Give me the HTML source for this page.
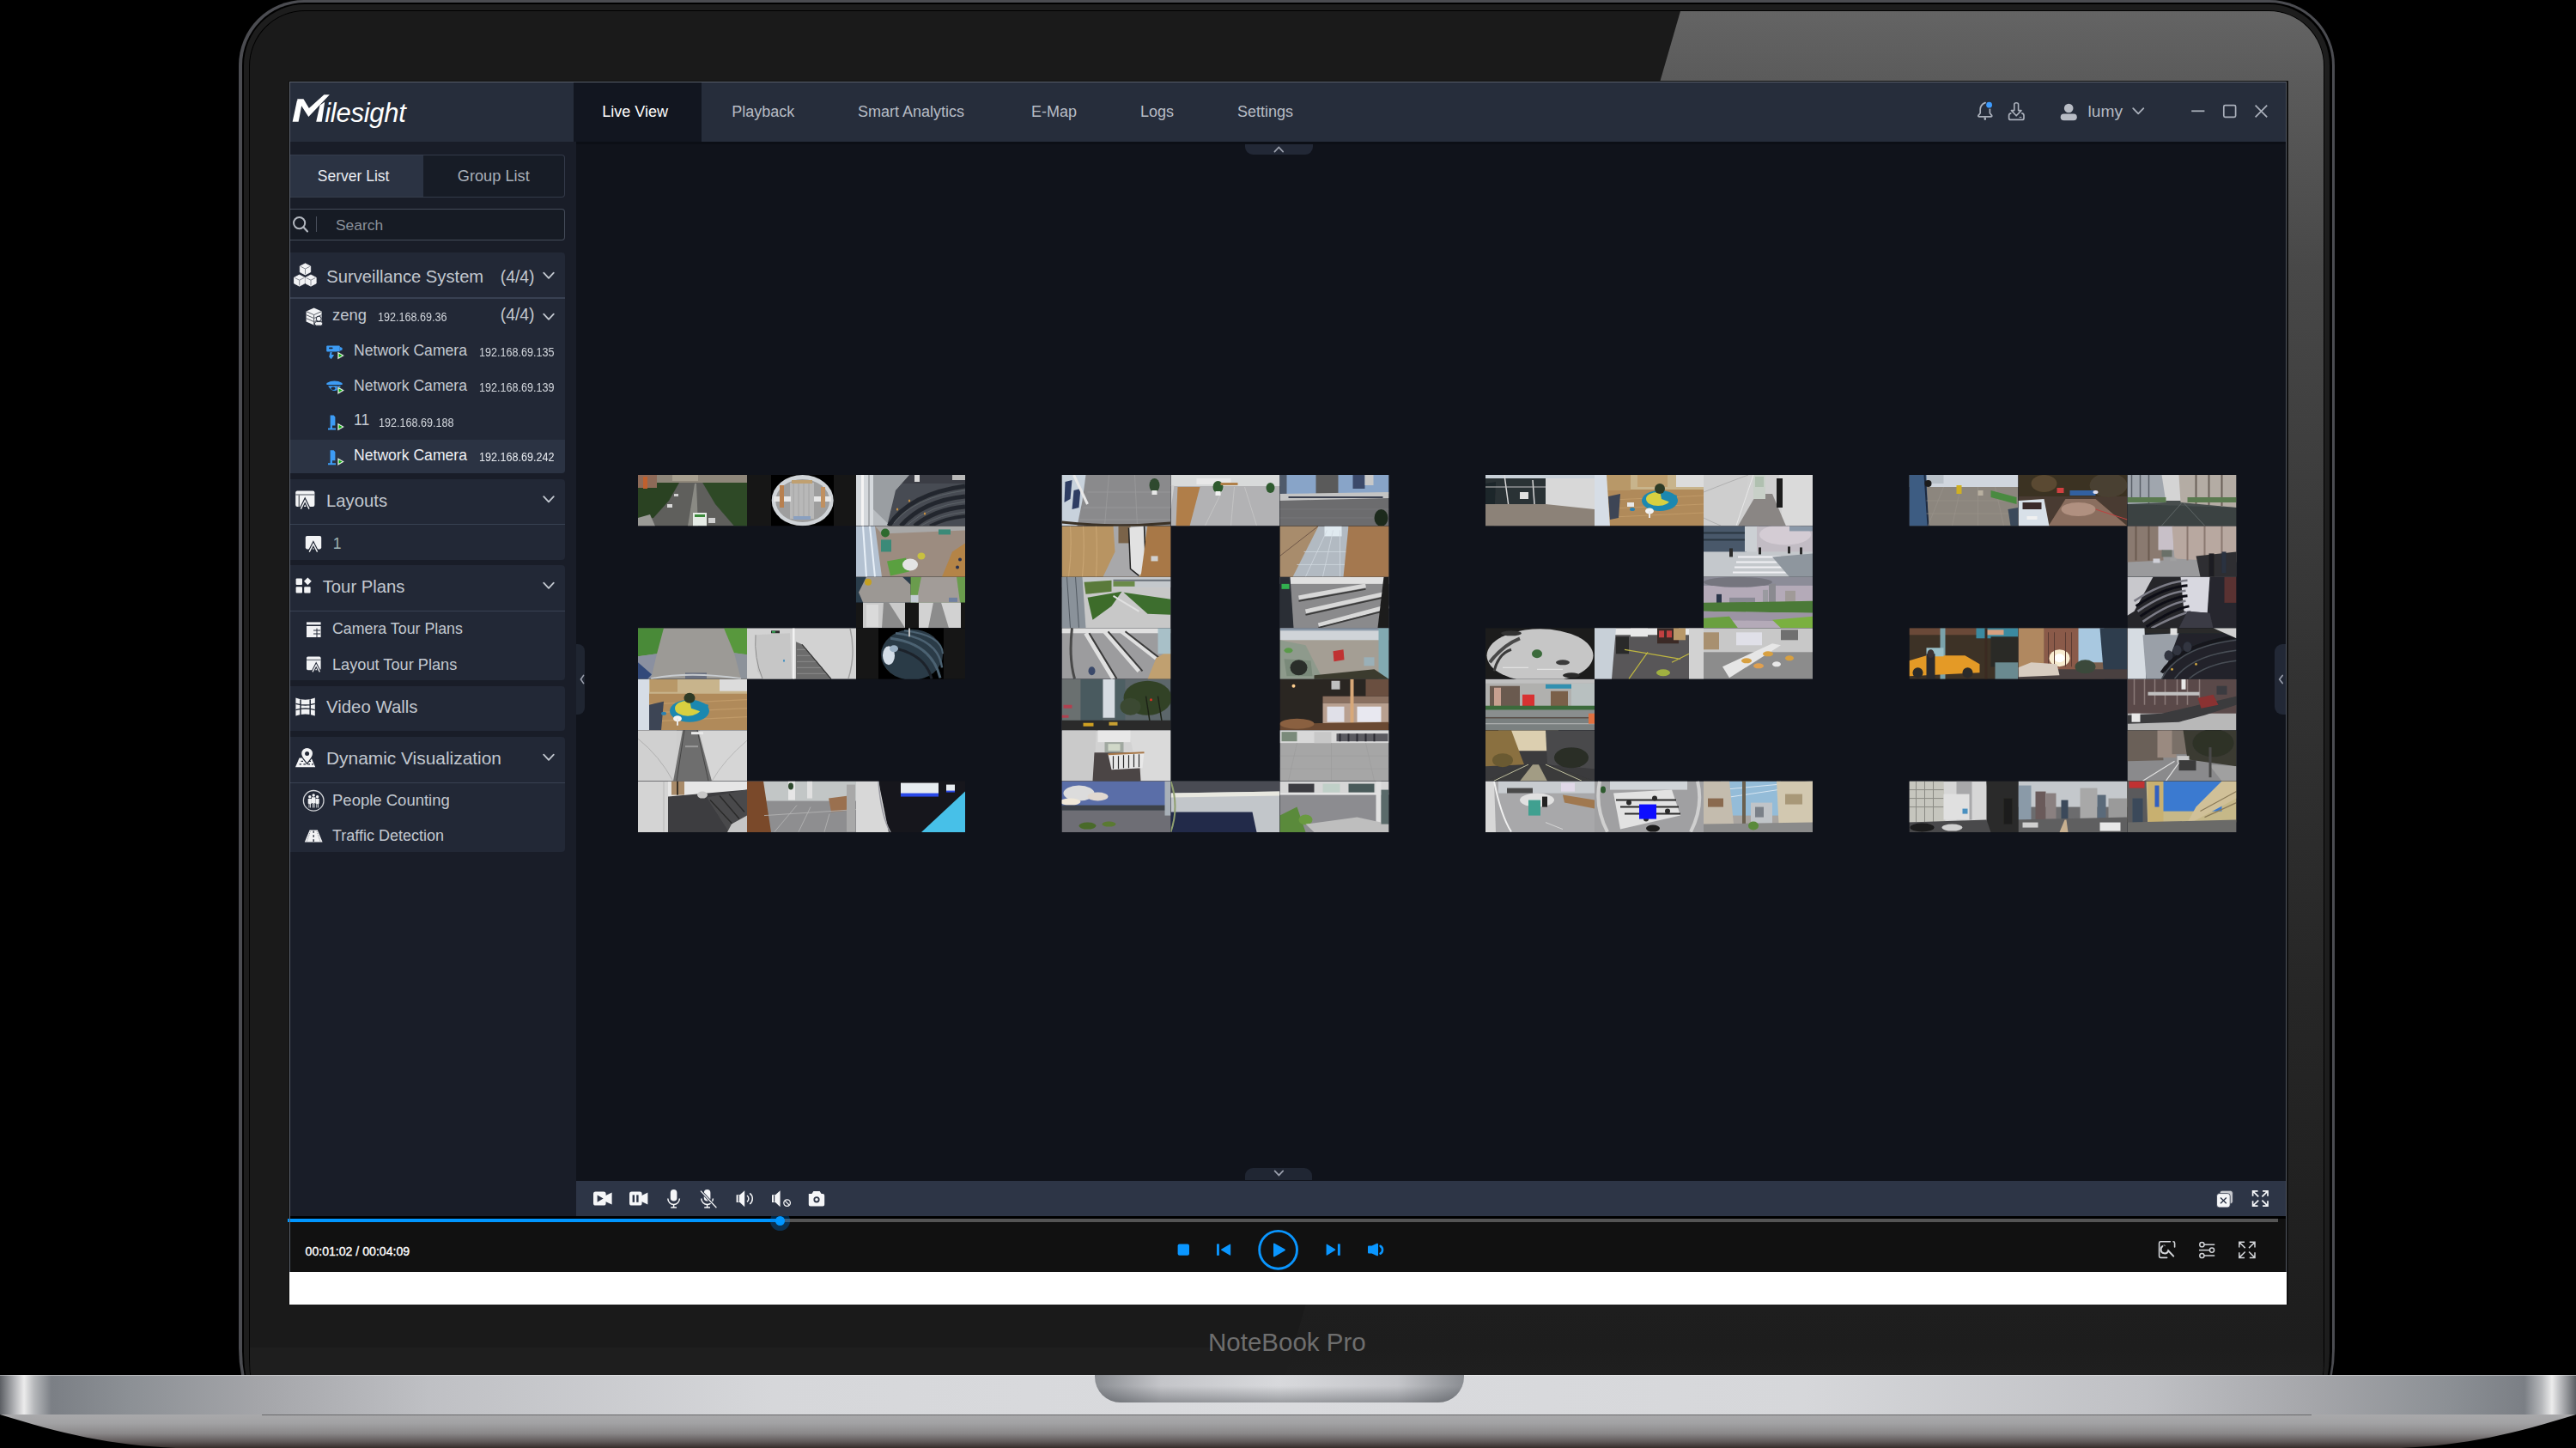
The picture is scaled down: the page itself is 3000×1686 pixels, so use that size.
<!DOCTYPE html>
<html><head><meta charset="utf-8">
<style>
*{margin:0;padding:0;box-sizing:border-box}
html,body{width:3000px;height:1686px;overflow:hidden;background:#000}
body{position:relative;font-family:"Liberation Sans",sans-serif}
.a{position:absolute}
.t{position:absolute;white-space:nowrap;line-height:1}
svg{overflow:visible}
</style></head><body>

<div class="a" style="left:278px;top:0;width:2441px;height:1732px;background:#4b4c51;border-radius:76px 76px 162px 162px / 76px 76px 162px 162px"></div>
<div class="a" style="left:281.5px;top:3.3px;width:2434px;height:1728.7px;background:#000;border-radius:73px 73px 158.5px 158.5px"></div>
<div class="a" style="left:284px;top:5px;width:2429px;height:1727px;background:#1d1d1d;border-radius:71px 71px 156px 156px"></div>
<div class="a" style="left:290px;top:12px;width:2417px;height:1720px;background:#000;border-radius:65px 65px 150px 150px"></div>
<div class="a" style="left:291px;top:13px;width:2415px;height:1719px;background:#1a1a1a;border-radius:64px 64px 149px 149px;overflow:hidden">
  <div class="a" style="left:0;top:1556px;width:2415px;height:60px;background:#1e1e1e"></div>
  <div class="a" style="left:0;top:0;width:2415px;height:1719px;clip-path:polygon(1666px 0,2415px 0,2415px 1719px,1168px 1719px);background:linear-gradient(#646464 0px,#5b5b5b 80px,#484848 300px,#333333 760px,#262626 1150px,#1d1d1d 1556px,#202020 1600px)"></div>
</div>

<div class="t" style="left:1407.00px;top:1547.91px;font-size:29.50px;color:#6e6e6e;">NoteBook Pro</div>
<div class="a" style="left:336.00px;top:93.50px;width:2329.00px;height:1425.50px;background:#101010;"></div>
<div class="a" style="left:337.00px;top:95.00px;width:2326.00px;height:69.50px;background:#262d3b;"></div>
<div class="a" style="left:667.50px;top:95.00px;width:149.50px;height:69.50px;background:#121620;"></div>
<div class="a" style="left:337.00px;top:164.50px;width:334.00px;height:1251.50px;background:#191d28;"></div>
<div class="a" style="left:671.00px;top:164.50px;width:1992.00px;height:1210.00px;background:#10131b;"></div>
<div class="a" style="left:671.00px;top:164.50px;width:1992.00px;height:3.30px;background:#0c0f16;"></div>
<div class="a" style="left:671.00px;top:1374.50px;width:1992.00px;height:41.50px;background:#2d3546;"></div>
<div class="a" style="left:337.00px;top:1416.00px;width:2326.00px;height:65.00px;background:#111111;"></div>
<div class="a" style="left:337.00px;top:1416.00px;width:2326.00px;height:2.50px;background:#000000;"></div>
<div class="a" style="left:337.00px;top:1481.00px;width:2326.00px;height:37.50px;background:#ffffff;"></div>
<div class="t" style="left:701.20px;top:121.25px;font-size:18.00px;color:#ffffff;">Live View</div>
<div class="t" style="left:852.20px;top:121.25px;font-size:18.00px;color:#b7bcc5;">Playback</div>
<div class="t" style="left:998.90px;top:121.25px;font-size:18.00px;color:#b7bcc5;">Smart Analytics</div>
<div class="t" style="left:1200.90px;top:121.25px;font-size:18.00px;color:#b7bcc5;">E-Map</div>
<div class="t" style="left:1328.00px;top:121.25px;font-size:18.00px;color:#b7bcc5;">Logs</div>
<div class="t" style="left:1441.00px;top:121.25px;font-size:18.00px;color:#b7bcc5;">Settings</div>
<div class="t" style="left:2431.60px;top:120.44px;font-size:19.20px;color:#b4b9c2;">lumy</div>
<div class="a" style="left:337.00px;top:180.00px;width:156.00px;height:49.60px;background:#2b3343;"></div>
<div class="a" style="left:337.00px;top:179.60px;width:156.00px;height:1.00px;background:#353c4b;"></div>
<div class="a" style="left:337.00px;top:229.00px;width:156.00px;height:1.00px;background:#353c4b;"></div>
<div class="a" style="left:493px;top:180px;width:165px;height:49.6px;background:#171c26;border:1px solid #333a49;border-left:none;border-radius:0 4px 4px 0"></div>
<div class="t" style="left:369.80px;top:196.78px;font-size:17.50px;color:#e8ebf0;">Server List</div>
<div class="t" style="left:532.80px;top:196.18px;font-size:18.20px;color:#a9afb9;">Group List</div>
<div class="a" style="left:337px;top:243.2px;width:321px;height:36.8px;background:#161b24;border:1.5px solid #444b59;border-left:none;border-radius:0 4px 4px 0"></div>
<div class="t" style="left:391.00px;top:253.66px;font-size:17.40px;color:#8a909a;">Search</div>
<div class="a" style="left:367.50px;top:252.00px;width:1.20px;height:18.00px;background:#4a505c;"></div>
<div class="a" style="left:337px;top:293.7px;width:321px;height:257.30px;background:#222836;border-radius:0 4px 4px 0"></div>
<div class="a" style="left:337.00px;top:346.30px;width:321.00px;height:1.50px;background:#384152;"></div>
<div class="a" style="left:337.00px;top:512.00px;width:321.00px;height:39.00px;background:#2b3343;border-radius:0 0 4px 0"></div>
<div class="a" style="left:337px;top:557.5px;width:321px;height:94.10px;background:#222836;border-radius:0 4px 4px 0"></div>
<div class="a" style="left:337.00px;top:609.90px;width:321.00px;height:1.50px;background:#384152;"></div>
<div class="a" style="left:337px;top:658px;width:321px;height:134.40px;background:#222836;border-radius:0 4px 4px 0"></div>
<div class="a" style="left:337.00px;top:710.60px;width:321.00px;height:1.50px;background:#384152;"></div>
<div class="a" style="left:337px;top:799.3px;width:321px;height:52.20px;background:#222836;border-radius:0 4px 4px 0"></div>
<div class="a" style="left:337px;top:858px;width:321px;height:134.30px;background:#222836;border-radius:0 4px 4px 0"></div>
<div class="a" style="left:337.00px;top:910.50px;width:321.00px;height:1.50px;background:#384152;"></div>
<div class="t" style="left:380.30px;top:312.39px;font-size:20.20px;color:#c3c8d0;">Surveillance System</div>
<div class="t" style="left:582.70px;top:313.07px;font-size:19.40px;color:#c3c8d0;">(4/4)</div>
<div class="t" style="left:387.00px;top:358.02px;font-size:18.40px;color:#c3c8d0;">zeng</div>
<div class="t" style="left:440.00px;top:361.94px;font-size:14.00px;color:#d2d6dc;transform:scaleX(0.9);transform-origin:0 0">192.168.69.36</div>
<div class="t" style="left:582.70px;top:357.17px;font-size:19.40px;color:#c3c8d0;">(4/4)</div>
<div class="t" style="left:412.00px;top:400.29px;font-size:17.60px;color:#c3c8d0;">Network Camera</div>
<div class="t" style="left:558.40px;top:403.34px;font-size:14.00px;color:#d2d6dc;transform:scaleX(0.9);transform-origin:0 0">192.168.69.135</div>
<div class="t" style="left:412.00px;top:440.89px;font-size:17.60px;color:#c3c8d0;">Network Camera</div>
<div class="t" style="left:558.40px;top:443.94px;font-size:14.00px;color:#d2d6dc;transform:scaleX(0.9);transform-origin:0 0">192.168.69.139</div>
<div class="t" style="left:412.00px;top:481.49px;font-size:17.60px;color:#c3c8d0;">11</div>
<div class="t" style="left:441.00px;top:484.54px;font-size:14.00px;color:#d2d6dc;transform:scaleX(0.9);transform-origin:0 0">192.168.69.188</div>
<div class="t" style="left:412.00px;top:522.09px;font-size:17.60px;color:#eef0f4;">Network Camera</div>
<div class="t" style="left:558.40px;top:525.14px;font-size:14.00px;color:#e6e9ee;transform:scaleX(0.9);transform-origin:0 0">192.168.69.242</div>
<div class="t" style="left:380.00px;top:572.81px;font-size:20.30px;color:#c3c8d0;">Layouts</div>
<div class="t" style="left:387.80px;top:624.59px;font-size:17.60px;color:#9fb2b4;">1</div>
<div class="t" style="left:375.70px;top:673.01px;font-size:20.30px;color:#c3c8d0;">Tour Plans</div>
<div class="t" style="left:387.00px;top:724.22px;font-size:17.80px;color:#c3c8d0;">Camera Tour Plans</div>
<div class="t" style="left:387.00px;top:764.58px;font-size:18.20px;color:#c3c8d0;">Layout Tour Plans</div>
<div class="t" style="left:380.00px;top:812.72px;font-size:20.40px;color:#c3c8d0;">Video Walls</div>
<div class="t" style="left:380.00px;top:873.00px;font-size:20.90px;color:#c3c8d0;">Dynamic Visualization</div>
<div class="t" style="left:387.00px;top:922.83px;font-size:18.50px;color:#c3c8d0;">People Counting</div>
<div class="t" style="left:387.00px;top:963.75px;font-size:18.00px;color:#c3c8d0;">Traffic Detection</div>
<div class="a" style="left:337.00px;top:1416.00px;width:2326.00px;height:2.80px;background:#000000;"></div>
<div class="a" style="left:335.00px;top:1418.90px;width:2317.50px;height:4.00px;background:#555555;"></div>
<div class="a" style="left:335.00px;top:1418.80px;width:573.60px;height:4.30px;background:#0096ff;"></div>
<div class="a" style="left:897px;top:1409.6px;width:23.2px;height:23.2px;border-radius:50%;background:rgba(0,120,220,0.32)"></div>
<div class="a" style="left:902.7px;top:1415.5px;width:11.8px;height:11.8px;border-radius:50%;background:#0096ff"></div>
<div class="a" style="left:671.00px;top:1374.50px;width:1992.00px;height:41.50px;background:#2d3546;"></div>
<div class="t" style="left:355.60px;top:1449.56px;font-size:14.10px;color:#ffffff;-webkit-text-stroke:0.35px #fff">00:01:02 / 00:04:09</div>
<svg class="a" style="left:0;top:0" width="3000" height="200"><polygon fill="#ffffff" points="340.66,141.64 346.02,116.60 352.42,116.60 347.65,141.64"/><polygon fill="#ffffff" points="346.02,115.26 353.47,115.26 359.88,125.92 377.35,110.37 383.87,110.37 359.30,135.99"/><polygon fill="#ffffff" points="368.21,141.64 372.58,122.42 378.22,118.64 374.73,141.64"/></svg>
<div class="t" style="left:378.2px;top:115.5px;font-size:31px;font-style:italic;color:#fff;letter-spacing:-0.25px">ilesight</div>
<svg class="a" style="left:0;top:0" width="3000" height="1686" viewBox="0 0 3000 1686"><defs><clipPath id="tc"><rect x="0" y="0" width="127" height="59.43"/></clipPath><filter id="bl" x="-5%" y="-5%" width="110%" height="110%"><feGaussianBlur stdDeviation="0.55"/></filter></defs><g transform="translate(743.00,553.00)" clip-path="url(#tc)"><g filter="url(#bl)"><rect x="0" y="0" width="127" height="59.43" fill="#5e5e5c"/><polygon points="0,9 48,9 36,30 18,50 0,52" fill="#2a4224"/><polygon points="74,7 127,7 127,59.43 112,59.43 90,34" fill="#2e4a28"/><rect x="0" y="0" width="127" height="9" fill="#8f877a"/><rect x="0" y="0" width="22" height="15" fill="#8e6a58"/><rect x="6" y="2" width="5" height="14" fill="#c0602e"/><rect x="40" y="0" width="30" height="7" fill="#a8a090"/><polygon points="58,59.43 70,59.43 68,10 66,10" fill="#8a8a84"/><rect x="64" y="44" width="16" height="15.43" fill="#e6ece6"/><rect x="66" y="46" width="12" height="3" fill="#3a8a3a"/><rect x="82" y="50" width="8" height="6" fill="#cfcfcf"/><rect x="34" y="34" width="6" height="4" fill="#d8d8d8"/><rect x="42" y="22" width="5" height="3" fill="#d0d0d0"/><polygon points="0,50 14,46 20,59.43 0,59.43" fill="#9a9a96"/></g></g><g transform="translate(870.00,553.00)" clip-path="url(#tc)"><g filter="url(#bl)"><rect x="0" y="0" width="127" height="59.43" fill="#141414"/><rect x="28" y="0" width="73" height="59.43" fill="#000"/><ellipse cx="64.7" cy="29.7" rx="36" ry="29.6" fill="#d0d4d8"/><ellipse cx="64.7" cy="30" rx="31.5" ry="25" fill="#9e9e9e"/><rect x="50" y="9" width="28" height="42" fill="#b8b8b8"/><path d="M54,10 V50 M60,10 V50 M66,10 V50 M72,10 V50" fill="none" stroke="#a0a0a0" stroke-width="0.8"/><rect x="31" y="25" width="20" height="6" fill="#e6e6e6"/><rect x="78" y="25" width="20" height="6" fill="#e6e6e6"/><rect x="38" y="12" width="5" height="26" fill="#b88050"/><rect x="86" y="14" width="5" height="24" fill="#c09060"/><rect x="52" y="6" width="24" height="4" fill="#c0a070"/><rect x="54" y="48" width="20" height="4" fill="#8aa0c0"/></g></g><g transform="translate(997.00,553.00)" clip-path="url(#tc)"><g filter="url(#bl)"><rect x="0" y="0" width="127" height="59.43" fill="#474b52"/><rect x="0" y="0" width="127" height="10" fill="#3a3e44"/><polygon points="20,0 62,0 46,18 36,59.43 20,59.43" fill="#9a9ea2"/><polygon points="20,40 40,59.43 20,59.43" fill="#b8bcc0"/><rect x="68" y="0" width="6" height="8" fill="#d8d8d8"/><rect x="0" y="0" width="20" height="59.43" fill="#d4d8dc"/><rect x="6" y="0" width="3" height="59.43" fill="#f4f4f4"/><rect x="14" y="0" width="2" height="59.43" fill="#a8acb0"/><rect x="112" y="0" width="15" height="6" fill="#b8b8b8"/><path d="M38,59.43 Q62,22 127,13" fill="none" stroke="#24282e" stroke-width="5"/><path d="M52,59.43 Q78,30 127,25" fill="none" stroke="#24282e" stroke-width="5"/><path d="M68,59.43 Q92,40 127,37" fill="none" stroke="#24282e" stroke-width="5"/><path d="M86,59.43 Q105,50 127,48" fill="none" stroke="#24282e" stroke-width="4"/><path d="M44,56 Q68,26 127,18" fill="none" stroke="#5c6268" stroke-width="1"/><path d="M60,58 Q85,36 127,31" fill="none" stroke="#5c6268" stroke-width="1"/><path d="M76,59 Q98,46 127,43" fill="none" stroke="#5c6268" stroke-width="1"/><ellipse cx="48" cy="40" rx="1.2" ry="1.5" fill="#c89040"/><ellipse cx="62" cy="30" rx="1.2" ry="1.5" fill="#c89040"/><ellipse cx="80" cy="45" rx="1.2" ry="1.5" fill="#c89040"/></g></g><g transform="translate(997.00,612.43)" clip-path="url(#tc)"><g filter="url(#bl)"><rect x="0" y="0" width="127" height="59.43" fill="#9c8c80"/><polygon points="22,0 127,0 127,5 30,9" fill="#a8a8a8"/><polygon points="0,0 22,0 30,59.43 0,59.43" fill="#b4c2d2"/><path d="M8,0 L12,59.43 M16,0 L22,59.43" fill="none" stroke="#e8f0f8" stroke-width="2"/><rect x="29" y="16" width="12" height="14" fill="#3a8a78"/><ellipse cx="34" cy="8" rx="5" ry="5" fill="#2e6a2e"/><polygon points="36,41 58,37 62,53 40,58" fill="#5aa040"/><ellipse cx="63" cy="45" rx="9" ry="7" fill="#e4e4e4"/><ellipse cx="76" cy="35" rx="4.5" ry="4" fill="#c8c040"/><polygon points="112,30 127,20 127,59.43 100,59.43" fill="#b48446"/><ellipse cx="118" cy="48" rx="2" ry="2" fill="#2a3050"/><ellipse cx="121" cy="39" rx="2" ry="2" fill="#2a3050"/><rect x="96" y="4" width="14" height="6" fill="#3a8a78"/></g></g><g transform="translate(997.00,671.86)" clip-path="url(#tc)"><g filter="url(#bl)"><rect x="0" y="0" width="127" height="59.43" fill="#121212"/><rect x="0" y="0" width="63.5" height="29.7" fill="#2c3c4c"/><polygon points="12,0 54,0 63.5,9 63.5,29.7 8,29.7 3,18" fill="#9c9894"/><ellipse cx="14" cy="6" rx="4" ry="4" fill="#c4a020"/><rect x="63.5" y="0" width="63.5" height="29.7" fill="#6a9c4e"/><polygon points="76,0 117,0 121,29.7 70,29.7" fill="#a29c98"/><rect x="63.5" y="21" width="9" height="8.7" fill="#c4ccd4"/><rect x="108" y="24" width="10" height="5" fill="#7080a0"/><rect x="8" y="29.7" width="49" height="29.73" fill="#cacaca"/><rect x="12" y="32" width="14" height="26" fill="#dadada"/><polygon points="32,29.7 38,29.7 57,59.43 30,59.43" fill="#8a8a8a"/><rect x="73" y="29.7" width="49" height="29.73" fill="#d2d2d2"/><polygon points="90,29.7 99,29.7 108,59.43 84,59.43" fill="#8c8c8c"/></g></g><g transform="translate(743.00,731.29)" clip-path="url(#tc)"><g filter="url(#bl)"><rect x="0" y="0" width="127" height="59.43" fill="#9c9a96"/><polygon points="0,0 30,0 22,30 0,33" fill="#4a8a38"/><polygon points="100,0 127,0 127,31 112,29" fill="#58983e"/><polygon points="0,33 22,30 15,59.43 0,59.43" fill="#8a90a0"/><polygon points="0,40 16,54 11,59.43 0,59.43" fill="#30497a"/><polygon points="112,29 127,31 127,59.43 120,59.43" fill="#8c929a"/><rect x="55" y="52" width="25" height="7.43" fill="#6a7080"/><path d="M15,59 Q60,50 120,59" fill="none" stroke="#c8ccd0" stroke-width="2"/></g></g><g transform="translate(870.00,731.29)" clip-path="url(#tc)"><g filter="url(#bl)"><rect x="0" y="0" width="127" height="59.43" fill="#d2d2d2"/><polygon points="10,8 50,6 52,59.43 18,59.43 12,50" fill="#c6c6c6"/><path d="M10,8 Q8,35 18,59" fill="none" stroke="#8a8a8a" stroke-width="1"/><rect x="28" y="3" width="10" height="3" fill="#2a2a2a"/><rect x="29" y="3.5" width="4" height="2" fill="#30a050"/><rect x="53" y="0" width="2.5" height="59.43" fill="#f2f2f2"/><polygon points="57,16 64,19 98,59.43 57,59.43" fill="#6c6c6c"/><path d="M58,25 H70 M58,32 H76 M58,39 H82 M58,46 H88 M58,53 H93" fill="none" stroke="#8c8c8c" stroke-width="1"/><path d="M64,19 L98,59.43" fill="none" stroke="#303030" stroke-width="1.2"/><path d="M120,0 Q127,30 118,59" fill="none" stroke="#a0a0a0" stroke-width="1.5"/><ellipse cx="43" cy="38" rx="1" ry="1.5" fill="#4090c0"/></g></g><g transform="translate(997.00,731.29)" clip-path="url(#tc)"><g filter="url(#bl)"><rect x="0" y="0" width="127" height="59.43" fill="#121212"/><rect x="26" y="0" width="76" height="59.43" fill="#000"/><ellipse cx="65" cy="31" rx="36" ry="29.5" fill="#2c3a46"/><path d="M40,12 Q88,18 98,58" fill="none" stroke="#4c6272" stroke-width="3"/><path d="M46,6 Q96,12 100,46" fill="none" stroke="#4c6272" stroke-width="2.5"/><path d="M56,3 Q100,8 101,30" fill="none" stroke="#4c6272" stroke-width="2"/><path d="M36,22 Q80,28 88,59" fill="none" stroke="#1c242c" stroke-width="3"/><ellipse cx="38" cy="32" rx="7" ry="11" fill="#d4dee8"/><ellipse cx="44" cy="24" rx="5" ry="4" fill="#9ab0c4"/><path d="M62,0 V10" fill="none" stroke="#c0c0c0" stroke-width="2"/></g></g><g transform="translate(743.00,790.72)" clip-path="url(#tc)"><g filter="url(#bl)"><rect x="0" y="0" width="127" height="59.43" fill="#b08a5a"/><rect x="0" y="0" width="127" height="17" fill="#c8b48c"/><rect x="14" y="0" width="32" height="15" fill="#b89868"/><rect x="95" y="0" width="32" height="14" fill="#dcdcdc"/><path d="M0,30 L127,24 M0,40 L127,34 M0,50 L127,44" fill="none" stroke="#c09a68" stroke-width="1.2"/><rect x="0" y="0" width="13" height="59.43" fill="#d6dde6"/><polygon points="13,30 30,26 27,59.43 13,59.43" fill="#3e4454"/><ellipse cx="60" cy="37" rx="23" ry="13" fill="#1d88b0"/><ellipse cx="58" cy="34" rx="15" ry="9" fill="#d8d040"/><polygon points="60,24 82,30 80,40 62,34" fill="#1d88b0"/><ellipse cx="60" cy="22" rx="6.5" ry="6" fill="#2e3a28"/><ellipse cx="46" cy="46" rx="5" ry="3.5" fill="#f2f2f2"/><rect x="45" y="46" width="2" height="8" fill="#e8e8e8"/><ellipse cx="30" cy="40" rx="3" ry="2" fill="#2a80b0"/></g></g><g transform="translate(743.00,850.15)" clip-path="url(#tc)"><g filter="url(#bl)"><rect x="0" y="0" width="127" height="59.43" fill="#cecece"/><polygon points="0,0 45,0 44,59.43 0,59.43" fill="#d0d0d0"/><polygon points="72,0 127,0 127,59.43 85,59.43" fill="#d6d6d6"/><polygon points="41,59.43 86,59.43 70,0 52,0" fill="#6e6e6e"/><path d="M45,59 L54,0 M82,59 L69,0" fill="none" stroke="#3a3a3a" stroke-width="0.8"/><path d="M0,10 Q25,30 41,59.43" fill="none" stroke="#b0b0b0" stroke-width="1"/><path d="M127,12 Q100,35 86,59.43" fill="none" stroke="#b8b8b8" stroke-width="1"/><rect x="55" y="18" width="15" height="2" fill="#9a9a9a"/><rect x="62" y="2" width="14" height="3" fill="#e8e8e8"/></g></g><g transform="translate(743.00,909.58)" clip-path="url(#tc)"><g filter="url(#bl)"><rect x="0" y="0" width="127" height="59.43" fill="#3c3c3f"/><rect x="0" y="0" width="35" height="59.43" fill="#d4d4d4"/><path d="M30,0 V59" fill="none" stroke="#b8b8b8" stroke-width="1"/><polygon points="35,0 127,0 127,10 35,18" fill="#e6e6e6"/><rect x="39" y="0" width="15" height="16" fill="#a88a68"/><rect x="45" y="0" width="2" height="16" fill="#3a3028"/><polygon points="80,19 127,10 127,46 106,59.43" fill="#4a4a4c"/><path d="M84,22 L112,52 M95,17 L118,44 M106,15 L124,36" fill="none" stroke="#2a2a2a" stroke-width="1.5"/><polygon points="109,50 127,40 127,59.43 104,59.43" fill="#c6c6c6"/><ellipse cx="75" cy="16" rx="6" ry="4" fill="#c8c8c8"/></g></g><g transform="translate(870.00,909.58)" clip-path="url(#tc)"><g filter="url(#bl)"><rect x="0" y="0" width="127" height="59.43" fill="#8e8e90"/><rect x="0" y="0" width="127" height="23" fill="#c2c6c6"/><rect x="48" y="0" width="8" height="22" fill="#e6e6e6"/><rect x="70" y="0" width="6" height="20" fill="#e0e0e0"/><ellipse cx="51" cy="6" rx="3" ry="4" fill="#2e4a2e"/><polygon points="0,0 19,0 28,59.43 0,59.43" fill="#7a4a2a"/><polygon points="95,20 118,17 120,34 98,36" fill="#9a7050"/><path d="M32,59 L58,28 M60,59 L74,30 M90,59 L96,38 M20,40 L127,33" fill="none" stroke="#b8b8b8" stroke-width="0.8"/><rect x="116" y="4" width="10" height="55" fill="#a8a8a8"/></g></g><g transform="translate(997.00,909.58)" clip-path="url(#tc)"><g filter="url(#bl)"><rect x="0" y="0" width="127" height="59.43" fill="#17181b"/><polygon points="0,0 26,0 38,59.43 0,59.43" fill="#d8d8d8"/><path d="M26,0 Q29,40 40,59.43" fill="none" stroke="#9898a0" stroke-width="1.5"/><rect x="52" y="2" width="44" height="14" fill="#e8ecf0"/><rect x="52" y="14" width="44" height="4" fill="#2a48e8"/><rect x="105" y="4" width="10" height="8" fill="#e8ecf0"/><rect x="105" y="11" width="10" height="2" fill="#2a48e8"/><polygon points="127,12 127,59.43 76,59.43" fill="#46c0e8"/></g></g><g transform="translate(1236.50,553.00)" clip-path="url(#tc)"><g filter="url(#bl)"><rect x="0" y="0" width="127" height="59.43" fill="#8a8a8c"/><path d="M30,20 H127 M25,38 H127 M20,52 H127 M55,0 L50,59 M85,0 L88,59" fill="none" stroke="#9a9a9c" stroke-width="0.8"/><polygon points="0,0 28,0 24,30 18,59.43 0,59.43" fill="#c8d2dc"/><polygon points="4,8 12,6 10,28 3,32" fill="#2e3e64"/><polygon points="14,18 22,16 20,38 12,40" fill="#2e3e64"/><path d="M14,0 L30,34" fill="none" stroke="#e8e8e8" stroke-width="3"/><ellipse cx="108" cy="12" rx="6" ry="8" fill="#2e4a2e"/><rect x="105" y="18" width="6" height="5" fill="#e8e8e8"/><path d="M0,55 Q60,62 127,56" fill="none" stroke="#3a3028" stroke-width="3"/></g></g><g transform="translate(1363.50,553.00)" clip-path="url(#tc)"><g filter="url(#bl)"><rect x="0" y="0" width="127" height="59.43" fill="#b2b2b4"/><rect x="0" y="0" width="127" height="13" fill="#d8dada"/><rect x="30" y="4" width="40" height="7" fill="#e8e8e8"/><polygon points="8,14 34,14 22,59.43 6,59.43" fill="#b07e48"/><polygon points="0,40 4,12 0,12" fill="#d0d0d0"/><path d="M40,59 L62,14 M70,59 L74,14 M100,59 L86,14" fill="none" stroke="#c8c8c8" stroke-width="0.8"/><ellipse cx="55" cy="14" rx="6" ry="7" fill="#2e5a2e"/><rect x="52" y="19" width="6" height="5" fill="#f0f0f0"/><ellipse cx="116" cy="15" rx="5" ry="6" fill="#2e5a2e"/><rect x="58" y="9" width="20" height="3" fill="#b08048"/></g></g><g transform="translate(1490.50,553.00)" clip-path="url(#tc)"><g filter="url(#bl)"><rect x="0" y="0" width="127" height="59.43" fill="#6c6c6e"/><rect x="0" y="0" width="127" height="22" fill="#88a4c8"/><rect x="42" y="0" width="26" height="22" fill="#5a5a5a"/><rect x="85" y="0" width="14" height="16" fill="#3a4a6a"/><rect x="99" y="0" width="10" height="12" fill="#c8c8c8"/><rect x="0" y="0" width="8" height="22" fill="#505a6a"/><polygon points="0,22 127,20 127,27 0,30" fill="#c4c4c4"/><path d="M10,26 H120" fill="none" stroke="#3a4050" stroke-width="2"/><path d="M0,40 H127 M0,50 H127" fill="none" stroke="#7a7a7c" stroke-width="0.8"/><ellipse cx="118" cy="50" rx="8" ry="10" fill="#1e2a1e"/></g></g><g transform="translate(1236.50,612.43)" clip-path="url(#tc)"><g filter="url(#bl)"><rect x="0" y="0" width="127" height="59.43" fill="#b89462"/><path d="M10,0 Q12,30 8,59 M25,0 Q27,30 24,59 M40,0 Q42,30 40,59" fill="none" stroke="#c8a472" stroke-width="1.2"/><polygon points="60,0 100,0 90,59.43 48,59.43 62,30" fill="#a8a8aa"/><rect x="66" y="0" width="14" height="20" fill="#7a6448"/><polygon points="78,2 96,0 98,50 90,58 80,50" fill="#e2e2e2"/><path d="M78,2 L80,50 L90,58" fill="none" stroke="#202020" stroke-width="1.5"/><path d="M96,0 L98,50" fill="none" stroke="#202020" stroke-width="1.5"/><polygon points="100,0 127,0 127,59.43 92,59.43" fill="#a87846"/><rect x="104" y="35" width="8" height="6" fill="#d0d0d0"/></g></g><g transform="translate(1490.50,612.43)" clip-path="url(#tc)"><g filter="url(#bl)"><rect x="0" y="0" width="127" height="59.43" fill="#a68864"/><polygon points="0,0 45,0 40,30 15,59.43 0,59.43" fill="#a88c6c"/><path d="M0,35 L45,0" fill="none" stroke="#705848" stroke-width="1"/><polygon points="45,0 80,0 82,59.43 15,59.43" fill="#b2bac2"/><rect x="52" y="0" width="20" height="12" fill="#e0eaf0"/><path d="M30,59 L55,5 M50,59 L62,5 M70,59 L70,5 M20,45 H82 M28,30 H80" fill="none" stroke="#d0d8e0" stroke-width="0.8"/><polygon points="80,0 127,0 127,59.43 74,59.43" fill="#a47850"/></g></g><g transform="translate(1236.50,671.86)" clip-path="url(#tc)"><g filter="url(#bl)"><rect x="0" y="0" width="127" height="59.43" fill="#c8c8c8"/><rect x="0" y="0" width="127" height="12" fill="#c4c8cc"/><path d="M60,4 H127" fill="none" stroke="#6a7078" stroke-width="2"/><polygon points="0,0 24,0 28,59.43 0,59.43" fill="#8a929a"/><path d="M6,0 L10,59 M16,0 L20,59" fill="none" stroke="#505860" stroke-width="1"/><polygon points="26,6 58,4 58,17 28,20" fill="#5a7a3a"/><rect x="60" y="5" width="25" height="6" fill="#6a8a4a"/><polygon points="30,24 70,17 58,34 36,50" fill="#3c6c2c"/><polygon points="72,18 127,26 127,44 100,43" fill="#3e6e2e"/><path d="M60,22 L90,40" fill="none" stroke="#e0e0e0" stroke-width="2"/></g></g><g transform="translate(1490.50,671.86)" clip-path="url(#tc)"><g filter="url(#bl)"><rect x="0" y="0" width="127" height="59.43" fill="#8a8a8c"/><rect x="0" y="0" width="127" height="8" fill="#e0e0e0"/><polygon points="0,0 12,0 16,59.43 0,59.43" fill="#2a2e34"/><rect x="2" y="8" width="9" height="6" fill="#30b050"/><path d="M22,24 L100,10 M30,40 L120,20 M45,56 L127,34" fill="none" stroke="#d8d8d8" stroke-width="5"/><path d="M22,28 L100,14 M30,44 L120,24 M45,59 L127,38" fill="none" stroke="#3a3a3a" stroke-width="2"/><polygon points="121,0 127,0 127,59.43 114,59.43" fill="#1a1a1a"/></g></g><g transform="translate(1236.50,731.29)" clip-path="url(#tc)"><g filter="url(#bl)"><rect x="0" y="0" width="127" height="59.43" fill="#9c9c9e"/><rect x="0" y="0" width="127" height="6" fill="#e0e0e0"/><path d="M12,0 Q8,35 15,59" fill="none" stroke="#4a4a4a" stroke-width="3"/><path d="M28,6 L60,59 M50,4 L90,50 M70,4 L110,35" fill="none" stroke="#e0e0e0" stroke-width="5"/><path d="M32,6 L64,59 M54,4 L94,50 M74,4 L114,35" fill="none" stroke="#3a3a3a" stroke-width="2"/><polygon points="110,35 127,25 127,59.43 100,59.43" fill="#c0a070"/><rect x="112" y="0" width="15" height="30" fill="#a8c0c8"/><ellipse cx="35" cy="50" rx="4" ry="5" fill="#3a4a6a"/></g></g><g transform="translate(1490.50,731.29)" clip-path="url(#tc)"><g filter="url(#bl)"><rect x="0" y="0" width="127" height="59.43" fill="#a49e94"/><rect x="0" y="0" width="127" height="14" fill="#d0d4d8"/><rect x="0" y="0" width="127" height="3" fill="#8a98a8"/><polygon points="0,14 30,20 50,59.43 0,59.43" fill="#8e9a8c"/><polygon points="5,36 36,38 38,56 8,56" fill="#7a8a7a"/><ellipse cx="22" cy="46" rx="10" ry="9" fill="#2a2e2a"/><ellipse cx="10" cy="26" rx="5" ry="3" fill="#5a9a4a"/><polygon points="62,27 74,25 75,37 63,39" fill="#c03030"/><rect x="98" y="34" width="12" height="10" fill="#9ab0b8"/><rect x="115" y="0" width="12" height="59.43" fill="#82aab2"/><polygon points="40,55 110,48 127,59.43 40,59.43" fill="#3a3a2e"/></g></g><g transform="translate(1236.50,790.72)" clip-path="url(#tc)"><g filter="url(#bl)"><rect x="0" y="0" width="127" height="59.43" fill="#5c666a"/><rect x="0" y="0" width="22" height="59.43" fill="#6a7070"/><rect x="2" y="30" width="10" height="4" fill="#b04050"/><rect x="0" y="42" width="8" height="3" fill="#b04050"/><rect x="22" y="0" width="26" height="50" fill="#4a5a5e"/><rect x="48" y="0" width="14" height="45" fill="#d6dce2"/><rect x="62" y="0" width="12" height="48" fill="#4e5e64"/><ellipse cx="100" cy="22" rx="28" ry="20" fill="#334228"/><ellipse cx="80" cy="32" rx="12" ry="10" fill="#3a4a30"/><path d="M98,20 L104,59 M112,20 L118,59" fill="none" stroke="#1e2418" stroke-width="1.5"/><ellipse cx="104" cy="24" rx="1.5" ry="1.5" fill="#e03020"/><rect x="0" y="48" width="127" height="11.43" fill="#2a2a2c"/><rect x="25" y="51" width="12" height="4" fill="#d0a020"/><rect x="55" y="50" width="10" height="4" fill="#c8a030"/></g></g><g transform="translate(1490.50,790.72)" clip-path="url(#tc)"><g filter="url(#bl)"><rect x="0" y="0" width="127" height="59.43" fill="#2c2520"/><ellipse cx="16" cy="8" rx="2" ry="2" fill="#ffd090"/><rect x="50" y="20" width="77" height="8" fill="#8a7060"/><rect x="50" y="28" width="77" height="24" fill="#b8a090"/><rect x="55" y="32" width="20" height="18" fill="#e0e0e8"/><rect x="90" y="32" width="28" height="18" fill="#e8e8f0"/><rect x="82" y="0" width="4" height="59.43" fill="#d8a878"/><rect x="60" y="2" width="10" height="10" fill="#c0c0c0"/><polygon points="0,52 127,50 127,59.43 0,59.43" fill="#6a4a30"/><ellipse cx="20" cy="52" rx="20" ry="6" fill="#8a6040"/><rect x="100" y="0" width="27" height="20" fill="#6a5040"/></g></g><g transform="translate(1236.50,850.15)" clip-path="url(#tc)"><g filter="url(#bl)"><rect x="0" y="0" width="127" height="59.43" fill="#d2d2d2"/><polygon points="0,0 40,0 38,59.43 0,59.43" fill="#cacaca"/><polygon points="78,0 127,0 127,59.43 90,59.43" fill="#dadada"/><rect x="42" y="0" width="38" height="14" fill="#e8e8e8"/><rect x="50" y="14" width="22" height="12" fill="#a0a8a0"/><rect x="54" y="16" width="14" height="8" fill="#d0d8c8"/><polygon points="38,26 90,26 92,59.43 36,59.43" fill="#4c4444"/><polygon points="54,28 96,26 94,44 58,46" fill="#e8e8e8"/><path d="M54,28 L96,26" fill="none" stroke="#a87848" stroke-width="2"/><path d="M60,30 V45 M66,30 V45 M72,29 V44 M78,29 V44 M84,28 V43 M90,28 V43" fill="none" stroke="#2a2a2a" stroke-width="1.2"/></g></g><g transform="translate(1490.50,850.15)" clip-path="url(#tc)"><g filter="url(#bl)"><rect x="0" y="0" width="127" height="59.43" fill="#a6a6a6"/><rect x="0" y="0" width="127" height="15" fill="#d8d8d8"/><rect x="2" y="2" width="18" height="11" fill="#7a8a7a"/><rect x="40" y="2" width="20" height="13" fill="#c8c8c8"/><rect x="66" y="4" width="60" height="9" fill="#5a5a60"/><path d="M70,4 V13 M80,4 V13 M90,4 V13 M100,4 V13 M110,4 V13" fill="none" stroke="#2a2a30" stroke-width="2"/><path d="M0,30 H127 M0,45 H127 M20,15 L10,59 M60,15 L60,59 M100,15 L110,59" fill="none" stroke="#9a9a9a" stroke-width="0.6"/></g></g><g transform="translate(1236.50,909.58)" clip-path="url(#tc)"><g filter="url(#bl)"><rect x="0" y="0" width="127" height="59.43" fill="#6e6e74"/><rect x="0" y="0" width="127" height="30" fill="#5a6ea8"/><ellipse cx="20" cy="14" rx="18" ry="9" fill="#dcdcdc"/><ellipse cx="42" cy="18" rx="12" ry="5" fill="#e0d8d0"/><ellipse cx="10" cy="24" rx="12" ry="4" fill="#f0e8d8"/><rect x="0" y="28" width="127" height="6" fill="#3c424a"/><ellipse cx="30" cy="52" rx="10" ry="4" fill="#4a6a2a"/><ellipse cx="55" cy="50" rx="8" ry="3" fill="#5a7a30"/><rect x="120" y="0" width="7" height="40" fill="#a8b0b8"/></g></g><g transform="translate(1363.50,909.58)" clip-path="url(#tc)"><g filter="url(#bl)"><rect x="0" y="0" width="127" height="59.43" fill="#c2c6ca"/><polygon points="0,0 127,0 127,12 0,14" fill="#4a4c52"/><polygon points="0,14 127,12 127,17 0,19" fill="#e8e8e0"/><polygon points="0,36 95,36 100,59.43 0,59.43" fill="#21294a"/><path d="M0,0 Q10,30 0,59" fill="none" stroke="#90a070" stroke-width="2"/></g></g><g transform="translate(1490.50,909.58)" clip-path="url(#tc)"><g filter="url(#bl)"><rect x="0" y="0" width="127" height="59.43" fill="#8c8c90"/><rect x="0" y="0" width="127" height="15" fill="#d6d6d6"/><rect x="10" y="3" width="30" height="10" fill="#3a3a40"/><rect x="50" y="3" width="20" height="10" fill="#c0d0c8"/><rect x="80" y="3" width="30" height="10" fill="#4a5a5a"/><path d="M0,15 H127" fill="none" stroke="#e8e8e8" stroke-width="2"/><rect x="112" y="0" width="6" height="59.43" fill="#e0e0e0"/><polygon points="0,40 20,30 30,59.43 0,59.43" fill="#5a8a3a"/><ellipse cx="30" cy="45" rx="8" ry="6" fill="#6a9a40"/><polygon points="30,50 90,42 127,50 127,59.43 40,59.43" fill="#bebebe"/><rect x="118" y="10" width="9" height="40" fill="#5a6a6a"/></g></g><g transform="translate(1730.00,553.00)" clip-path="url(#tc)"><g filter="url(#bl)"><rect x="0" y="0" width="127" height="59.43" fill="#8a8078"/><rect x="0" y="0" width="127" height="34" fill="#2c3236"/><rect x="70" y="0" width="57" height="40" fill="#d8d8d8"/><rect x="0" y="0" width="127" height="4" fill="#c8d0d8"/><polygon points="0,10 12,8 10,59.43 0,59.43" fill="#1e262a"/><path d="M22,0 L30,59 M55,6 L58,48 M76,10 L76,42 M88,8 L90,40" fill="none" stroke="#d8d8d8" stroke-width="1.5"/><path d="M0,14 H70" fill="none" stroke="#c0c0c0" stroke-width="1"/><rect x="40" y="20" width="10" height="8" fill="#e0e0e0"/><polygon points="0,34 70,34 127,40 127,59.43 0,59.43" fill="#8c8278"/></g></g><g transform="translate(1857.00,553.00)" clip-path="url(#tc)"><g filter="url(#bl)"><rect x="0" y="0" width="127" height="59.43" fill="#b08a5a"/><rect x="0" y="0" width="127" height="17" fill="#c8b48c"/><rect x="12" y="0" width="30" height="18" fill="#b89868"/><rect x="50" y="0" width="35" height="14" fill="#c0a070"/><rect x="95" y="0" width="32" height="14" fill="#dcdcdc"/><path d="M0,30 L127,24 M0,40 L127,34 M0,50 L127,44" fill="none" stroke="#c09a68" stroke-width="1.2"/><polygon points="0,0 14,0 18,59.43 0,59.43" fill="#d6dde6"/><polygon points="16,25 30,22 28,50 18,52" fill="#3e4454"/><ellipse cx="76" cy="30" rx="21" ry="12" fill="#1d88b0"/><ellipse cx="74" cy="28" rx="14" ry="8" fill="#d8d040"/><polygon points="76,18 96,24 94,34 78,28" fill="#1d88b0"/><ellipse cx="76" cy="16" rx="6" ry="6" fill="#2e3a28"/><ellipse cx="64" cy="42" rx="5" ry="3.5" fill="#f2f2f2"/><rect x="63" y="42" width="2" height="8" fill="#e8e8e8"/><ellipse cx="44" cy="40" rx="3" ry="2" fill="#2a80b0"/><rect x="38" y="32" width="8" height="5" fill="#e8e8e8"/></g></g><g transform="translate(1984.00,553.00)" clip-path="url(#tc)"><g filter="url(#bl)"><rect x="0" y="0" width="127" height="59.43" fill="#d0d0d0"/><polygon points="0,0 52,0 45,59.43 0,59.43" fill="#cecece"/><path d="M0,20 Q30,8 52,0 M0,50 Q10,55 20,59" fill="none" stroke="#b0b0b0" stroke-width="1"/><polygon points="88,0 127,0 127,59.43 92,59.43" fill="#dadada"/><polygon points="40,59.43 96,59.43 80,22 62,22" fill="#8a8684"/><rect x="58" y="0" width="14" height="28" fill="#c8d0c8"/><rect x="60" y="2" width="10" height="12" fill="#b0c0b0"/><rect x="85" y="4" width="7" height="34" fill="#1e1e1e"/><path d="M38,59 L58,0" fill="none" stroke="#e8e8e8" stroke-width="1"/></g></g><g transform="translate(1984.00,612.43)" clip-path="url(#tc)"><g filter="url(#bl)"><rect x="0" y="0" width="127" height="59.43" fill="#c4c8cc"/><rect x="0" y="0" width="50" height="30" fill="#48586a"/><path d="M0,8 H50 M0,16 H50" fill="none" stroke="#2a3440" stroke-width="2"/><rect x="48" y="0" width="16" height="30" fill="#ccd0d4"/><rect x="62" y="0" width="65" height="30" fill="#c2bcc4"/><ellipse cx="95" cy="10" rx="30" ry="12" fill="#d4ccd4"/><rect x="100" y="0" width="27" height="6" fill="#8a98a8"/><path d="M40,36 H90 M38,42 H95 M36,48 H100 M34,54 H105" fill="none" stroke="#f0f0f4" stroke-width="2"/><polygon points="80,36 127,32 127,59.43 100,59.43" fill="#8e969e"/><rect x="30" y="26" width="4" height="10" fill="#2a2a2a"/><rect x="64" y="25" width="3" height="8" fill="#2a2a2a"/><rect x="98" y="24" width="3" height="8" fill="#2a2a2a"/><rect x="112" y="25" width="3" height="8" fill="#2a2a2a"/></g></g><g transform="translate(1984.00,671.86)" clip-path="url(#tc)"><g filter="url(#bl)"><rect x="0" y="0" width="127" height="59.43" fill="#b4aab8"/><rect x="0" y="0" width="127" height="10" fill="#8c8c98"/><ellipse cx="40" cy="6" rx="40" ry="6" fill="#74747e"/><rect x="76" y="8" width="8" height="24" fill="#8a8a90"/><rect x="69" y="15" width="6" height="17" fill="#9a9aa0"/><rect x="95" y="16" width="12" height="16" fill="#a09a98"/><rect x="15" y="20" width="6" height="12" fill="#2a3448"/><rect x="30" y="24" width="30" height="8" fill="#8a8a94"/><polygon points="0,30 127,28 127,42 0,40" fill="#4c7a38"/><polygon points="0,40 127,42 127,52 0,50" fill="#9c94a4"/><polygon points="0,48 30,46 40,59.43 0,59.43" fill="#6aa040"/><polygon points="80,50 127,46 127,59.43 90,59.43" fill="#7ab040"/></g></g><g transform="translate(1730.00,731.29)" clip-path="url(#tc)"><g filter="url(#bl)"><rect x="0" y="0" width="127" height="59.43" fill="#1a1a1a"/><ellipse cx="63.5" cy="32" rx="62" ry="31" fill="#c6c6c6"/><path d="M5,40 Q20,20 40,12" fill="none" stroke="#4a4a4a" stroke-width="4"/><path d="M10,50 Q15,30 30,25" fill="none" stroke="#3a3a3a" stroke-width="3"/><ellipse cx="60" cy="30" rx="6" ry="5" fill="#3a6a3a"/><ellipse cx="30" cy="6" rx="12" ry="3" fill="#303030"/><ellipse cx="90" cy="40" rx="8" ry="3" fill="#3a3a3a"/><ellipse cx="100" cy="55" rx="10" ry="3" fill="#2a2a2a"/><path d="M20,46 H50 M60,48 H90" fill="none" stroke="#e8e8e8" stroke-width="1"/></g></g><g transform="translate(1857.00,731.29)" clip-path="url(#tc)"><g filter="url(#bl)"><rect x="0" y="0" width="127" height="59.43" fill="#585658"/><rect x="0" y="0" width="127" height="8" fill="#e8e8e8"/><polygon points="0,0 25,0 20,59.43 0,59.43" fill="#c8d0d8"/><rect x="42" y="0" width="20" height="10" fill="#e8e8e8"/><rect x="73" y="0" width="25" height="18" fill="#3a2a28"/><rect x="75" y="3" width="6" height="8" fill="#c04040"/><rect x="84" y="3" width="6" height="8" fill="#c04040"/><rect x="92" y="0" width="14" height="14" fill="#b89868"/><rect x="25" y="10" width="15" height="20" fill="#2a2a2a"/><path d="M35,25 L100,36 M62,28 L40,59 M90,40 L110,30" fill="none" stroke="#c0b840" stroke-width="1.2"/><rect x="110" y="0" width="17" height="59.43" fill="#d2d2d2"/><ellipse cx="80" cy="52" rx="8" ry="4" fill="#a0b040"/></g></g><g transform="translate(1984.00,731.29)" clip-path="url(#tc)"><g filter="url(#bl)"><rect x="0" y="0" width="127" height="59.43" fill="#8c8c8c"/><rect x="0" y="0" width="127" height="28" fill="#c8c8c8"/><rect x="0" y="5" width="18" height="20" fill="#a89070"/><rect x="38" y="5" width="30" height="15" fill="#e0e0e8"/><rect x="90" y="2" width="20" height="12" fill="#707070"/><polygon points="22,45 80,18 90,20 30,58" fill="#e6e6e6"/><ellipse cx="50" cy="38" rx="6" ry="3" fill="#d8a040"/><ellipse cx="75" cy="30" rx="6" ry="3" fill="#d8a040"/><ellipse cx="85" cy="42" rx="5" ry="3" fill="#e8e8e8"/><ellipse cx="64" cy="44" rx="6" ry="3" fill="#e0a050"/><ellipse cx="100" cy="35" rx="5" ry="3" fill="#d8a040"/></g></g><g transform="translate(1730.00,790.72)" clip-path="url(#tc)"><g filter="url(#bl)"><rect x="0" y="0" width="127" height="59.43" fill="#7a8080"/><rect x="0" y="0" width="127" height="36" fill="#b0b0ae"/><rect x="0" y="0" width="127" height="5" fill="#c0c0c0"/><rect x="5" y="8" width="35" height="26" fill="#6a5a50"/><rect x="10" y="10" width="8" height="22" fill="#c8a090"/><rect x="43" y="18" width="14" height="14" fill="#d83232"/><rect x="70" y="6" width="32" height="5" fill="#3090b0"/><rect x="76" y="14" width="20" height="20" fill="#7a6048"/><rect x="100" y="5" width="27" height="30" fill="#b8c0c0"/><rect x="0" y="31" width="127" height="5" fill="#3a6a3a"/><rect x="0" y="36" width="127" height="8" fill="#8a8e8e"/><path d="M0,45 H127" fill="none" stroke="#5a5048" stroke-width="1.5"/><path d="M0,52 H127" fill="none" stroke="#c8c8c8" stroke-width="0.8"/><rect x="120" y="40" width="7" height="12" fill="#e07040"/></g></g><g transform="translate(1730.00,850.15)" clip-path="url(#tc)"><g filter="url(#bl)"><rect x="0" y="0" width="127" height="59.43" fill="#3a3a3c"/><polygon points="15,0 85,0 80,24 20,24" fill="#dccfb0"/><polygon points="0,0 30,0 45,40 0,42" fill="#8a7040"/><polygon points="70,0 127,0 127,45 72,40" fill="#4a4a4c"/><ellipse cx="20" cy="35" rx="12" ry="8" fill="#6a5a30"/><ellipse cx="100" cy="32" rx="20" ry="12" fill="#2a2e28"/><polygon points="0,59.43 45,40 75,40 127,59.43" fill="#3a3a3a"/><polygon points="40,59.43 55,40 62,40 72,59.43" fill="#a29c84"/><path d="M10,59 L50,40 M112,59 L70,40" fill="none" stroke="#c0c0a0" stroke-width="1"/></g></g><g transform="translate(1730.00,909.58)" clip-path="url(#tc)"><g filter="url(#bl)"><rect x="0" y="0" width="127" height="59.43" fill="#a8a8aa"/><polygon points="0,0 10,0 12,59.43 0,59.43" fill="#d8d8d8"/><path d="M10,0 Q18,40 30,59" fill="none" stroke="#f0f0f0" stroke-width="2"/><rect x="15" y="0" width="112" height="14" fill="#c8ccd0"/><rect x="25" y="8" width="30" height="6" fill="#4a4a4a"/><rect x="88" y="2" width="16" height="10" fill="#e0d8e8"/><ellipse cx="60" cy="22" rx="20" ry="8" fill="#e0e0e0"/><rect x="50" y="22" width="14" height="18" fill="#40a090"/><rect x="66" y="18" width="6" height="12" fill="#202020"/><polygon points="90,16 127,22 127,32 92,25" fill="#a07850"/><path d="M70,48 L90,56" fill="none" stroke="#e0e0e0" stroke-width="0.8"/></g></g><g transform="translate(1857.00,909.58)" clip-path="url(#tc)"><g filter="url(#bl)"><rect x="0" y="0" width="127" height="59.43" fill="#a0a0a2"/><path d="M6,0 Q0,30 15,59" fill="none" stroke="#d0d0d0" stroke-width="4"/><path d="M120,0 Q127,30 112,59" fill="none" stroke="#d0d0d0" stroke-width="4"/><rect x="18" y="0" width="90" height="10" fill="#d0d4d8"/><polygon points="22,14 90,10 100,40 30,56" fill="#e2e2e2"/><path d="M25,22 H95 M30,30 H98 M35,38 H100" fill="none" stroke="#2a2a2a" stroke-width="2"/><ellipse cx="40" cy="25" rx="3" ry="3" fill="#2a2a2a"/><ellipse cx="70" cy="20" rx="3" ry="3" fill="#2a2a2a"/><ellipse cx="85" cy="35" rx="3" ry="3" fill="#2a2a2a"/><ellipse cx="60" cy="44" rx="3" ry="3" fill="#2a2a2a"/><rect x="52" y="27" width="20" height="17" fill="#0a10ff"/><ellipse cx="68" cy="55" rx="8" ry="4" fill="#1a1a1a"/><ellipse cx="10" cy="10" rx="3" ry="4" fill="#2e5a2e"/></g></g><g transform="translate(1984.00,909.58)" clip-path="url(#tc)"><g filter="url(#bl)"><rect x="0" y="0" width="127" height="59.43" fill="#a8a4a0"/><rect x="20" y="0" width="70" height="40" fill="#94bcd8"/><path d="M20,10 L127,0 M20,20 L120,5" fill="none" stroke="#e8f0f8" stroke-width="0.8"/><polygon points="0,0 30,0 35,50 0,55" fill="#c4bcae"/><rect x="5" y="20" width="18" height="10" fill="#8a6a50"/><polygon points="85,0 127,0 127,59.43 88,59.43" fill="#d2c8b0"/><rect x="95" y="15" width="20" height="12" fill="#a89878"/><rect x="45" y="0" width="4" height="59.43" fill="#6a6050"/><rect x="55" y="25" width="25" height="25" fill="#c0c4c8"/><rect x="60" y="30" width="10" height="12" fill="#7a8088"/><polygon points="0,50 127,48 127,59.43 0,59.43" fill="#8a8a8a"/><ellipse cx="58" cy="52" rx="6" ry="5" fill="#5a8a3a"/></g></g><g transform="translate(2223.50,553.00)" clip-path="url(#tc)"><g filter="url(#bl)"><rect x="0" y="0" width="127" height="59.43" fill="#8c867e"/><rect x="0" y="0" width="127" height="14" fill="#d0d6de"/><rect x="20" y="0" width="20" height="10" fill="#b8c0c8"/><polygon points="0,0 20,0 22,59.43 0,59.43" fill="#3c5c82"/><path d="M18,0 L22,59" fill="none" stroke="#1e2a40" stroke-width="2"/><ellipse cx="22" cy="10" rx="4" ry="4" fill="#1a1a1a"/><path d="M22,59 L40,14 M50,59 L60,14 M80,59 L80,14 M110,59 L100,14 M20,30 H127 M20,45 H127" fill="none" stroke="#9a948c" stroke-width="0.6"/><polygon points="95,18 125,26 125,34 95,26" fill="#4a8a40"/><rect x="55" y="12" width="6" height="10" fill="#d0b020"/><rect x="80" y="18" width="6" height="6" fill="#b8b0a0"/><polygon points="115,40 127,38 127,59.43 118,59.43" fill="#3a4a5a"/></g></g><g transform="translate(2350.50,553.00)" clip-path="url(#tc)"><g filter="url(#bl)"><rect x="0" y="0" width="127" height="59.43" fill="#4a3a30"/><rect x="0" y="0" width="127" height="25" fill="#3a3020"/><ellipse cx="30" cy="10" rx="15" ry="10" fill="#5a4a30"/><ellipse cx="105" cy="12" rx="22" ry="14" fill="#4a4030"/><rect x="45" y="15" width="8" height="6" fill="#d04040"/><rect x="60" y="18" width="30" height="6" fill="#3060a0"/><ellipse cx="90" cy="20" rx="3" ry="2" fill="#e0e0f0"/><polygon points="35,59.43 55,28 90,28 127,59.43" fill="#8a6e5e"/><ellipse cx="70" cy="40" rx="20" ry="8" fill="#b09080"/><path d="M90,40 L127,52" fill="none" stroke="#c04040" stroke-width="1"/><polygon points="0,30 30,28 36,59.43 0,59.43" fill="#d8e0e8"/><rect x="5" y="32" width="22" height="8" fill="#3a2a2a"/><rect x="10" y="48" width="12" height="4" fill="#f0f0f0"/></g></g><g transform="translate(2477.50,553.00)" clip-path="url(#tc)"><g filter="url(#bl)"><rect x="0" y="0" width="127" height="59.43" fill="#464e4e"/><rect x="30" y="0" width="65" height="30" fill="#d4d4d4"/><polygon points="0,0 40,0 45,32 0,34" fill="#a0a6ae"/><path d="M5,0 V32 M15,0 V32 M25,0 V33" fill="none" stroke="#5a6068" stroke-width="1.5"/><polygon points="60,0 127,0 127,38 62,32" fill="#b4aca4"/><path d="M80,0 V34 M95,0 V35 M110,0 V36" fill="none" stroke="#6a6058" stroke-width="2"/><rect x="0" y="26" width="45" height="6" fill="#5a7a50"/><rect x="70" y="26" width="57" height="6" fill="#5a7a50"/><polygon points="0,34 127,38 127,59.43 0,59.43" fill="#3a4242"/><path d="M40,59 L63,33 M90,59 L66,33" fill="none" stroke="#6a7070" stroke-width="0.8"/></g></g><g transform="translate(2477.50,612.43)" clip-path="url(#tc)"><g filter="url(#bl)"><rect x="0" y="0" width="127" height="59.43" fill="#9a9a9c"/><polygon points="0,0 40,0 42,40 0,42" fill="#8a7a70"/><path d="M10,0 V40 M25,0 V40" fill="none" stroke="#6a5a50" stroke-width="2"/><rect x="36" y="0" width="18" height="28" fill="#c8c0c8"/><polygon points="52,0 127,0 127,42 55,38" fill="#b8a8a0"/><path d="M70,0 V40 M90,0 V40 M110,0 V42" fill="none" stroke="#8a7870" stroke-width="2"/><rect x="40" y="28" width="12" height="8" fill="#6a7068"/><rect x="30" y="38" width="8" height="5" fill="#d0d0d8"/><rect x="50" y="37" width="7" height="4" fill="#a0a0a0"/><polygon points="80,35 127,30 127,59.43 85,59.43" fill="#2e2e30"/><rect x="95" y="32" width="6" height="27" fill="#1e1e20"/><rect x="110" y="30" width="5" height="25" fill="#2a3040"/></g></g><g transform="translate(2477.50,671.86)" clip-path="url(#tc)"><g filter="url(#bl)"><rect x="0" y="0" width="127" height="59.43" fill="#26262c"/><polygon points="0,0 30,0 8,40 0,45" fill="#c8c8cc"/><polygon points="62,0 100,0 96,42 66,40" fill="#d8d8e0"/><polygon points="96,0 127,0 127,59.43 92,59.43" fill="#26262e"/><rect x="113" y="0" width="14" height="30" fill="#5a3030"/><path d="M8,28 Q40,6 70,4 M12,40 Q44,18 68,16 M18,52 Q50,30 68,28 M28,59.43 Q58,44 74,40" fill="none" stroke="#7c7c86" stroke-width="2.5"/><path d="M10,34 Q42,12 70,10 M15,46 Q47,24 70,22 M22,58 Q54,37 72,34" fill="none" stroke="#101014" stroke-width="3"/><polygon points="70,40 96,42 100,59.43 60,59.43" fill="#3a3a44"/></g></g><g transform="translate(2223.50,731.29)" clip-path="url(#tc)"><g filter="url(#bl)"><rect x="0" y="0" width="127" height="59.43" fill="#3c3028"/><rect x="0" y="0" width="127" height="8" fill="#6a4838"/><rect x="78" y="0" width="49" height="12" fill="#3a8aa0"/><rect x="90" y="2" width="20" height="6" fill="#d8a080"/><rect x="95" y="10" width="32" height="35" fill="#2a2a28"/><rect x="36" y="0" width="6" height="59.43" fill="#7aa2aa"/><rect x="88" y="0" width="3" height="59.43" fill="#3a2a20"/><polygon points="0,38 20,32 65,32 82,42 82,52 0,56" fill="#e49a28"/><rect x="20" y="23" width="20" height="10" fill="#9ac0c8"/><ellipse cx="10" cy="52" rx="6" ry="6" fill="#2a2a2a"/><ellipse cx="68" cy="52" rx="6" ry="6" fill="#2a2a2a"/><rect x="20" y="30" width="10" height="29.43" fill="#2a2a2e"/><ellipse cx="25" cy="30" rx="4" ry="5" fill="#3a3030"/><rect x="100" y="40" width="27" height="19.43" fill="#6a8a90"/></g></g><g transform="translate(2350.50,731.29)" clip-path="url(#tc)"><g filter="url(#bl)"><rect x="0" y="0" width="127" height="59.43" fill="#7a6050"/><rect x="0" y="0" width="30" height="50" fill="#b08860"/><rect x="30" y="0" width="40" height="50" fill="#8a5a48"/><ellipse cx="48" cy="35" rx="12" ry="10" fill="#f8ecd0"/><ellipse cx="48" cy="35" rx="6" ry="5" fill="#ffffff"/><rect x="70" y="0" width="30" height="40" fill="#a8c8e0"/><polygon points="95,0 127,0 127,59.43 100,59.43" fill="#2e3e4e"/><path d="M35,5 V45 M42,5 V45 M55,5 V45 M62,5 V45" fill="none" stroke="#5a3a30" stroke-width="1"/><rect x="0" y="48" width="127" height="11.43" fill="#4a4040"/><polygon points="0,46 15,40 45,42 48,55 0,57" fill="#d8ccc0"/><ellipse cx="78" cy="45" rx="12" ry="8" fill="#3a4a3a"/></g></g><g transform="translate(2477.50,731.29)" clip-path="url(#tc)"><g filter="url(#bl)"><rect x="0" y="0" width="127" height="59.43" fill="#20242a"/><rect x="0" y="0" width="127" height="6" fill="#2a2a2a"/><polygon points="0,0 20,0 22,59.43 0,59.43" fill="#d6dce2"/><polygon points="18,8 60,6 40,59.43 22,59.43" fill="#9aa0a8"/><rect x="50" y="0" width="8" height="8" fill="#e0e0e0"/><path d="M40,59 Q60,22 127,14 M55,59 Q75,32 127,26 M72,59 Q92,42 127,38" fill="none" stroke="#4a4e56" stroke-width="1.5"/><path d="M40,52 Q60,20 127,10" fill="none" stroke="#14161a" stroke-width="4"/><ellipse cx="48" cy="32" rx="5" ry="6" fill="#303440"/><ellipse cx="58" cy="26" rx="5" ry="6" fill="#303440"/><ellipse cx="70" cy="22" rx="5" ry="6" fill="#303440"/><ellipse cx="52" cy="48" rx="1.5" ry="1.5" fill="#c8a040"/><ellipse cx="80" cy="42" rx="1.5" ry="1.5" fill="#c8a040"/><polygon points="100,0 127,0 127,12" fill="#d0d0d0"/></g></g><g transform="translate(2477.50,790.72)" clip-path="url(#tc)"><g filter="url(#bl)"><rect x="0" y="0" width="127" height="59.43" fill="#b8b8b8"/><rect x="0" y="0" width="127" height="40" fill="#5a4a48"/><path d="M8,0 V30 M20,0 V30 M32,0 V30 M44,0 V30 M58,0 V30 M70,0 V30 M84,0 V22" fill="none" stroke="#8a7a78" stroke-width="1.5"/><rect x="24" y="15" width="60" height="4" fill="#c0c0c0"/><rect x="63" y="0" width="5" height="12" fill="#e8e8e8"/><polygon points="0,42 40,40 127,20 127,30 90,42 60,50 0,52" fill="#3a3a3e"/><polygon points="82,22 100,18 106,30 86,34" fill="#8a3030"/><rect x="104" y="8" width="12" height="10" fill="#3a3a40"/><rect x="5" y="40" width="10" height="10" fill="#e8e8e8"/></g></g><g transform="translate(2477.50,850.15)" clip-path="url(#tc)"><g filter="url(#bl)"><rect x="0" y="0" width="127" height="59.43" fill="#8a8a8c"/><polygon points="0,0 40,0 42,35 0,36" fill="#6a6058"/><rect x="35" y="0" width="22" height="32" fill="#9a8a80"/><rect x="52" y="0" width="18" height="28" fill="#7a7068"/><polygon points="65,0 127,0 127,42 70,34" fill="#3a3a32"/><ellipse cx="100" cy="15" rx="24" ry="16" fill="#2e3228"/><rect x="58" y="30" width="14" height="8" fill="#c8c8c8"/><rect x="60" y="35" width="20" height="12" fill="#3a3a3a"/><path d="M18,59 L55,36 M45,59 L60,38" fill="none" stroke="#e0e0e0" stroke-width="1.2"/><polygon points="95,40 127,42 127,59.43 110,59.43" fill="#a0a0a0"/><rect x="95" y="20" width="3" height="35" fill="#4a4a4a"/></g></g><g transform="translate(2223.50,909.58)" clip-path="url(#tc)"><g filter="url(#bl)"><rect x="0" y="0" width="127" height="59.43" fill="#2a2a2a"/><rect x="0" y="0" width="90" height="48" fill="#d6d6d6"/><polygon points="0,0 40,0 42,48 0,48" fill="#c6c6be"/><path d="M0,10 H40 M0,20 H40 M0,30 H40 M8,0 V48 M18,0 V48 M28,0 V48" fill="none" stroke="#8a8a84" stroke-width="1"/><rect x="55" y="0" width="18" height="45" fill="#a8a8aa"/><rect x="40" y="15" width="30" height="30" fill="#e0e0e0"/><rect x="62" y="32" width="6" height="6" fill="#4a90c0"/><polygon points="90,0 127,0 127,59.43 95,59.43" fill="#2c2c2a"/><rect x="110" y="20" width="10" height="30" fill="#1e1e1e"/><polygon points="0,48 90,45 95,59.43 0,59.43" fill="#4a4a4c"/><ellipse cx="15" cy="54" rx="14" ry="5" fill="#1a1a1a"/><ellipse cx="50" cy="54" rx="12" ry="4" fill="#d0d0d0"/></g></g><g transform="translate(2350.50,909.58)" clip-path="url(#tc)"><g filter="url(#bl)"><rect x="0" y="0" width="127" height="59.43" fill="#6c6c6e"/><rect x="0" y="0" width="127" height="30" fill="#c4c8cc"/><rect x="0" y="5" width="15" height="40" fill="#8a9aa8"/><rect x="20" y="12" width="12" height="33" fill="#6a5a5a"/><rect x="32" y="14" width="12" height="30" fill="#8a8080"/><rect x="50" y="22" width="8" height="22" fill="#3a4a5a"/><rect x="72" y="8" width="20" height="37" fill="#a8a8a8"/><rect x="92" y="16" width="10" height="28" fill="#5a6a7a"/><rect x="105" y="20" width="22" height="24" fill="#9a9a9a"/><polygon points="0,45 127,42 127,59.43 0,59.43" fill="#5e5e60"/><polygon points="48,59.43 54,45 56,45 58,59.43" fill="#c8b090"/><rect x="95" y="48" width="24" height="10" fill="#e8e8e8"/><rect x="5" y="48" width="18" height="6" fill="#d0d0d0"/></g></g><g transform="translate(2477.50,909.58)" clip-path="url(#tc)"><g filter="url(#bl)"><rect x="0" y="0" width="127" height="59.43" fill="#6a6a6a"/><rect x="0" y="0" width="127" height="48" fill="#c6b888"/><rect x="40" y="0" width="70" height="35" fill="#3a7ad0"/><polygon points="0,0 22,0 24,59.43 0,59.43" fill="#5a5a5c"/><rect x="2" y="0" width="18" height="8" fill="#c03030"/><rect x="6" y="20" width="12" height="35" fill="#3a4a5a"/><polygon points="24,0 42,0 42,48 24,48" fill="#c8b070"/><rect x="32" y="5" width="5" height="25" fill="#3060c0"/><polygon points="75,48 127,20 127,0 110,0 80,30 70,48" fill="#d0c098"/><path d="M85,35 L127,12 M90,42 L127,25" fill="none" stroke="#8a7a58" stroke-width="1.2"/><polygon points="0,48 127,45 127,59.43 0,59.43" fill="#6a6a68"/></g></g></svg>
<div class="a" style="left:1450px;top:167.6px;width:78.5px;height:12.8px;background:#222836;border-radius:0 0 9px 9px"></div>
<div class="a" style="left:1450.2px;top:1359.6px;width:77.8px;height:14.7px;background:#202633;border-radius:9px 9px 0 0"></div>
<div class="a" style="left:671px;top:750.3px;width:9.6px;height:81.3px;background:#1f2531;border-radius:0 8px 8px 0"></div>
<div class="a" style="left:2649px;top:750.3px;width:13px;height:81.3px;background:#222836;border-radius:9px 0 0 9px"></div>
<svg class="a" style="left:0;top:0" width="3000" height="1686" viewBox="0 0 3000 1686"><path d="M2303.9,134.6 Q2303.6,135.8 2305,135.8 H2318.6 Q2320,135.8 2319.7,134.6 L2317.4,131.8 V127.6 Q2317.4,122 2311.8,119.6 Q2306.2,122 2306.2,127.6 V131.8 Z" fill="none" stroke="#aab0bb" stroke-width="1.7" stroke-linejoin="round"/><path d="M2311.8,137.6 V138.8" stroke="#aab0bb" stroke-width="2.4" stroke-linecap="round"/><circle cx="2316.6" cy="122.2" r="4.6" fill="#262d3b"/><circle cx="2316.6" cy="122.2" r="3.4" fill="#3d9bff"/><path d="M2345.8,128.6 V121.6 Q2345.8,119.8 2348.2,119.8 Q2350.6,119.8 2350.6,121.6 V128.6 H2354 L2348.2,134.8 L2342.4,128.6 Z" fill="none" stroke="#aab0bb" stroke-width="1.6" stroke-linejoin="round"/><path d="M2342.4,131.8 Q2339.6,131.8 2339.6,134.6 V137.4 Q2339.6,139.4 2341.6,139.4 H2355 Q2357,139.4 2357,137.4 V134.6 Q2357,131.8 2354.2,131.8" fill="none" stroke="#aab0bb" stroke-width="1.7" stroke-linejoin="round"/><path d="M2351.6,136.6 H2354.4" stroke="#aab0bb" stroke-width="1"/><circle cx="2409.2" cy="126" r="5.3" fill="#b8bcc5"/><rect x="2399.7" y="132.4" width="19.1" height="7.8" rx="3.9" fill="#b8bcc5"/><path d="M2484.2,126.2 L2490.2,132.4 L2496.3,126.2" fill="none" stroke="#aab0bb" stroke-width="1.8" stroke-linecap="round" stroke-linejoin="round"/><path d="M2552.2,129.3 H2567.4" stroke="#aab0bb" stroke-width="1.8"/><rect x="2589.8" y="122.6" width="13.8" height="13.8" rx="1.6" fill="none" stroke="#aab0bb" stroke-width="1.7"/><path d="M2626.6,122.6 L2640.2,136.4 M2640.2,122.6 L2626.6,136.4" stroke="#aab0bb" stroke-width="1.7"/><circle cx="348.6" cy="259.6" r="6.6" fill="none" stroke="#b3b8c0" stroke-width="2"/><path d="M353.4,264.6 L358,269.4" stroke="#b3b8c0" stroke-width="2.2" stroke-linecap="round"/><path d="M355.5,306.79999999999995 L361.7,309.99999999999994 L361.7,316.8 L355.5,320.0 L349.3,316.8 L349.3,309.99999999999994 Z" fill="#f2f3f5" stroke="#f2f3f5" stroke-width="0.8" stroke-linejoin="round"/><path d="M350.3,310.4 L355.5,312.99999999999994 L360.7,310.4 M355.5,312.99999999999994 V319.2" fill="none" stroke="#7a7f88" stroke-width="0.9"/><path d="M348.7,320.0 L354.9,323.2 L354.9,330.00000000000006 L348.7,333.20000000000005 L342.5,330.00000000000006 L342.5,323.2 Z" fill="#f2f3f5" stroke="#f2f3f5" stroke-width="0.8" stroke-linejoin="round"/><path d="M343.5,323.6 L348.7,326.2 L353.9,323.6 M348.7,326.2 V332.40000000000003" fill="none" stroke="#7a7f88" stroke-width="0.9"/><path d="M362,320.0 L368.2,323.2 L368.2,330.00000000000006 L362,333.20000000000005 L355.8,330.00000000000006 L355.8,323.2 Z" fill="#f2f3f5" stroke="#f2f3f5" stroke-width="0.8" stroke-linejoin="round"/><path d="M356.8,323.6 L362,326.2 L367.2,323.6 M362,326.2 V332.40000000000003" fill="none" stroke="#7a7f88" stroke-width="0.9"/><path d="M356.6,362.6 L365.6,358.6 L374.6,362.6 L374.6,374.4 L365.6,378.6 L356.6,374.4 Z" fill="#f2f3f5"/><path d="M356.6,362.6 L365.6,366.6 L374.6,362.6 M356.6,366.6 L365.6,370.6 L374.6,366.6 M356.6,370.6 L365.6,374.6 L374.6,370.6 M365.6,366.6 V378.6" fill="none" stroke="#5d626b" stroke-width="1"/><circle cx="371.2" cy="371.2" r="3" fill="#f2f3f5" stroke="#222836" stroke-width="1"/><rect x="366.4" y="374.6" width="9.4" height="4.6" rx="2.2" fill="#f2f3f5" stroke="#222836" stroke-width="1"/><rect x="380.2" y="402.4" width="15.6" height="7" rx="1" fill="#3d9cf5"/><rect x="383" y="404.6" width="4.6" height="1.6" rx="0.8" fill="#222836"/><path d="M396,404 L398.6,405 L398.6,407.6 L396,408.6 Z" fill="#3d9cf5"/><path d="M384.6,410 L386.6,410 L386.2,413 L389,413 L388,415 L385.6,418.3 L383.2,415.6 Z" fill="#3d9cf5"/><path d="M393,409.2 L401.4,414.0 L393,418.8 Z" fill="#e8f5e8" stroke="#1b2130" stroke-width="0.6"/><path d="M394.6,411.8 L398.6,414.0 L394.6,416.2 Z" fill="#0bb10b"/><path d="M380.4,446 Q389.5,441.2 398.6,446 L398.6,448 L380.4,448 Z" fill="#3d9cf5"/><path d="M382,449.2 Q389.5,461 397,449.2 Z" fill="#3d9cf5"/><ellipse cx="388" cy="452.3" rx="2.6" ry="1.8" fill="#222836"/><path d="M393,449.8 L401.4,454.6 L393,459.40000000000003 Z" fill="#e8f5e8" stroke="#1b2130" stroke-width="0.6"/><path d="M394.6,452.40000000000003 L398.6,454.6 L394.6,456.8 Z" fill="#0bb10b"/><path d="M384.6,483.6 L388.6,483.6 L390.4,485.6 L390.4,495.6 L387,495.6 L387,498.6 L391,498.6 L391,500.6 L382,500.6 L382,498.6 L384.6,498.6 Z" fill="#3d9cf5"/><path d="M393,492.20000000000005 L401.4,497.00000000000006 L393,501.80000000000007 Z" fill="#e8f5e8" stroke="#1b2130" stroke-width="0.6"/><path d="M394.6,494.80000000000007 L398.6,497.00000000000006 L394.6,499.20000000000005 Z" fill="#0bb10b"/><path d="M384.6,524.2 L388.6,524.2 L390.4,526.2 L390.4,536.2 L387,536.2 L387,539.2 L391,539.2 L391,541.2 L382,541.2 L382,539.2 L384.6,539.2 Z" fill="#3d9cf5"/><path d="M393,532.8000000000001 L401.4,537.6 L393,542.4000000000001 Z" fill="#e8f5e8" stroke="#1b2130" stroke-width="0.6"/><path d="M394.6,535.4000000000001 L398.6,537.6 L394.6,539.8000000000001 Z" fill="#0bb10b"/><path d="M633.2,317.6 L639,323.8 L644.8,317.6" fill="none" stroke="#c3c8d0" stroke-width="1.8" stroke-linecap="round" stroke-linejoin="round"/><path d="M633.2,365.6 L639,371.8 L644.8,365.6" fill="none" stroke="#c3c8d0" stroke-width="1.8" stroke-linecap="round" stroke-linejoin="round"/><path d="M633.2,578.1 L639,584.3 L644.8,578.1" fill="none" stroke="#c3c8d0" stroke-width="1.8" stroke-linecap="round" stroke-linejoin="round"/><path d="M633.2,678.6 L639,684.8 L644.8,678.6" fill="none" stroke="#c3c8d0" stroke-width="1.8" stroke-linecap="round" stroke-linejoin="round"/><path d="M633.2,878.6 L639,884.8 L644.8,878.6" fill="none" stroke="#c3c8d0" stroke-width="1.8" stroke-linecap="round" stroke-linejoin="round"/><rect x="344.2" y="571.5" width="22.2" height="18.6" rx="2" fill="#f2f3f5"/><path d="M344.2,576 H366.4" stroke="#70747c" stroke-width="1.3"/><path d="M348.3,576.6 V590.2" stroke="#5a5e66" stroke-width="1.3"/><path d="M350.4,592.6 L355.2,582.8 L360,592.6" fill="none" stroke="#222836" stroke-width="3.8"/><path d="M350.4,592.6 L355.2,582.8 L360,592.6" fill="none" stroke="#f2f3f5" stroke-width="1.4"/><rect x="355.8" y="624" width="18.4" height="15.4" rx="1.8" fill="#f2f3f5"/><path d="M360.2,642.6 L364.9,633.4 L369.6,642.6" fill="none" stroke="#222836" stroke-width="3.8"/><path d="M360.2,642.6 L364.9,633.4 L369.6,642.6" fill="none" stroke="#f2f3f5" stroke-width="1.4"/><rect x="344.6" y="673.6" width="7.4" height="7.4" rx="1" fill="#f2f3f5"/><rect x="344.6" y="683.2" width="7.4" height="7.4" rx="1" fill="#f2f3f5"/><rect x="354.2" y="683.2" width="7.4" height="7.4" rx="1" fill="#f2f3f5"/><path d="M358.4,672.4 L362.8,676.8 L358.4,681.2 L354,676.8 Z" fill="#f2f3f5"/><path d="M357,724.4 H373.6 V727.4 H357 Z" fill="#f2f3f5"/><path d="M357,729 H373.6 V742 H357 Z" fill="#f2f3f5"/><path d="M365,734 H373 M365,738 H373 M369,731.6 V742" stroke="#222836" stroke-width="1"/><rect x="357" y="764.6" width="16.6" height="15.6" rx="1.6" fill="#f2f3f5"/><path d="M357,768.4 H373.6" stroke="#70747c" stroke-width="1.3"/><path d="M364,782.4 L368.2,774.2 L372.4,782.4" fill="none" stroke="#222836" stroke-width="3.4"/><path d="M364,782.4 L368.2,774.2 L372.4,782.4" fill="none" stroke="#f2f3f5" stroke-width="1.3"/><path d="M344.4,812.6 Q355.6,817 366.8,812.6 V833.6 Q355.6,829.2 344.4,833.6 Z" fill="#f2f3f5"/><path d="M344.4,819.4 Q355.6,822.6 366.8,819.4 M344.4,826.6 Q355.6,823.6 366.8,826.6 M350,814.4 V832 M361.2,814.4 V832" fill="none" stroke="#222836" stroke-width="1.5"/><path d="M348.6,882.6 H362.6 L367.2,893.2 H344 Z" fill="#f2f3f5"/><path d="M350.6,886.4 H353 M355,886.4 H357.6 M359.6,886.4 H362 M348.6,889.8 H351 M353.4,889.8 H356 M358.4,889.8 H361 M363,889.8 H365" stroke="#222836" stroke-width="1.3"/><path d="M357.6,870.4 A7,7 0 0 1 364.6,877.4 C364.6,881.6 360.2,885.4 357.6,889.4 C355,885.4 350.6,881.6 350.6,877.4 A7,7 0 0 1 357.6,870.4 Z" fill="#f2f3f5" stroke="#222836" stroke-width="1.2"/><circle cx="357.6" cy="877.4" r="2.5" fill="#222836"/><circle cx="365.2" cy="932.3" r="11.8" fill="none" stroke="#d4d6da" stroke-width="1.3"/><circle cx="360.8" cy="927.8000000000001" r="1.7" fill="#f2f3f5"/><path d="M358.7,930.0 H362.90000000000003 V935.72 H362.00000000000006 V940.4 H361.2 V936.24 H360.40000000000003 V940.4 H359.59999999999997 V935.72 H358.7 Z" fill="#f2f3f5"/><circle cx="369.6" cy="927.8000000000001" r="1.7" fill="#f2f3f5"/><path d="M367.5,930.0 H371.70000000000005 V935.72 H370.80000000000007 V940.4 H370.0 V936.24 H369.20000000000005 V940.4 H368.4 V935.72 H367.5 Z" fill="#f2f3f5"/><circle cx="365.2" cy="926.0" r="1.7" fill="#f2f3f5"/><path d="M363.0,928.1999999999999 H367.4 V934.91 H366.5 V940.4 H365.59999999999997 V935.52 H364.8 V940.4 H363.9 V934.91 H363.0 Z" fill="#f2f3f5"/><path d="M360.6,966.6 H369.8 L375.6,980.4 H354.8 Z" fill="#f2f3f5"/><path d="M365.2,967.4 V969.8 M365.2,972.2 V974.8 M365.2,977.2 V980" stroke="#222836" stroke-width="1.4"/><path d="M361.4,968 L357.4,979.6 M369,968 L373,979.6" stroke="#8a8e96" stroke-width="0.9" stroke-dasharray="1.2,1"/><rect x="691" y="1387.6" width="14.6" height="16" rx="2.6" fill="#f5f6f8"/><path d="M705,1392.2 L712.6,1388.6 V1402.6 L705,1399 Z" fill="#f5f6f8"/><path d="M695.6,1391.4 L702.6,1395.6 L695.6,1399.8 Z" fill="#2d3546"/><rect x="733" y="1387.6" width="14.6" height="16" rx="2.6" fill="#f5f6f8"/><path d="M747,1392.2 L754.4,1388.6 V1402.6 L747,1399 Z" fill="#f5f6f8"/><rect x="736.6" y="1391.4" width="2.4" height="8.4" fill="#2d3546"/><rect x="741.2" y="1391.4" width="2.4" height="8.4" fill="#2d3546"/><rect x="780.8" y="1385" width="7.6" height="13.6" rx="3.8" fill="#f5f6f8"/><path d="M777.8,1395.6 A6.8,6.8 0 0 0 791.4,1395.6" fill="none" stroke="#f5f6f8" stroke-width="1.5"/><path d="M784.5999999999999,1402.4 V1405.6 M781.1999999999999,1406 H788.0" stroke="#f5f6f8" stroke-width="1.5"/><rect x="819.8" y="1385" width="7.6" height="13.6" rx="3.8" fill="#f5f6f8"/><path d="M816.8,1395.6 A6.8,6.8 0 0 0 830.4,1395.6" fill="none" stroke="#f5f6f8" stroke-width="1.5"/><path d="M823.5999999999999,1402.4 V1405.6 M820.1999999999999,1406 H827.0" stroke="#f5f6f8" stroke-width="1.5"/><path d="M816.0,1386.6 L834.4,1406.2" stroke="#2d3546" stroke-width="3"/><path d="M816.0,1386.6 L834.4,1406.2" stroke="#f5f6f8" stroke-width="1.3"/><path d="M857.6,1391.2 H861.6 L867.2,1386.2 V1405.2 L861.6,1400 H857.6 Z" fill="#f5f6f8"/><rect x="859.6" y="1391.6" width="1.2" height="8" fill="#2d3546"/><path d="M870.0,1392 A4.6,4.6 0 0 1 870.0,1399.4 M873.2,1389.4 A8,8 0 0 1 873.2,1402" fill="none" stroke="#f5f6f8" stroke-width="1.5"/><path d="M899,1391.2 H903 L908.6,1386.2 V1405.2 L903,1400 H899 Z" fill="#f5f6f8"/><rect x="901" y="1391.6" width="1.2" height="8" fill="#2d3546"/><circle cx="916.6" cy="1400.6" r="3.8" fill="#2d3546" stroke="#f5f6f8" stroke-width="1.3"/><path d="M914.2,1398.2 L919,1403" stroke="#f5f6f8" stroke-width="1.2"/><path d="M941.8,1390 H945.4 L947.4,1386.9 H954.6 L956.6,1390 H958.2 A2,2 0 0 1 960.2,1392 V1402.6 A2,2 0 0 1 958.2,1404.6 H943.8 A2,2 0 0 1 941.8,1402.6 Z" fill="#f5f6f8"/><circle cx="951" cy="1396.8" r="3.6" fill="#2d3546"/><circle cx="951" cy="1396.8" r="1.8" fill="#f5f6f8"/><rect x="2585" y="1386.2" width="15.4" height="15.6" rx="3" fill="#c9cbd0" stroke="#2d3546" stroke-width="0.8"/><rect x="2581.6" y="1389.6" width="15.6" height="16.4" rx="3" fill="#f5f6f8" stroke="#2d3546" stroke-width="0.8"/><path d="M2586,1394.4 L2592.8,1401.2 M2592.8,1394.4 L2586,1401.2" stroke="#2d3546" stroke-width="1.4"/><path d="M2623.6,1392.716 V1386.8 H2629.516 M2623.6,1386.8 L2630.212,1393.412 M2635.084,1386.8 H2641.0 V1392.716 M2641.0,1386.8 L2634.388,1393.412 M2623.6,1398.284 V1404.2 H2629.516 M2623.6,1404.2 L2630.212,1397.588 M2635.084,1404.2 H2641.0 V1398.284 M2641.0,1404.2 L2634.388,1397.588" fill="none" stroke="#f5f6f8" stroke-width="1.7"/><rect x="1371.6" y="1448.4" width="13.4" height="13.4" rx="2" fill="#0a96ff"/><rect x="1417" y="1448.4" width="2.9" height="13.4" fill="#0a96ff"/><path d="M1433.2,1449.2 V1461 Q1433.2,1462 1432.2,1461.4 L1422.4,1455.8 Q1421.4,1455.1 1422.4,1454.4 L1432.2,1448.8 Q1433.2,1448.2 1433.2,1449.2 Z" fill="#0a96ff"/><circle cx="1488.6" cy="1455.3" r="21.9" fill="none" stroke="#0a96ff" stroke-width="2.9"/><path d="M1483,1448.6 Q1483,1447 1484.4,1447.8 L1496.4,1454.6 Q1497.6,1455.4 1496.4,1456.2 L1484.4,1463.2 Q1483,1464 1483,1462.4 Z" fill="#0a96ff"/><path d="M1544.6,1449.2 V1461 Q1544.6,1462 1545.6,1461.4 L1555,1455.8 Q1556,1455.1 1555,1454.4 L1545.6,1448.8 Q1544.6,1448.2 1544.6,1449.2 Z" fill="#0a96ff"/><rect x="1557.9" y="1448.4" width="2.9" height="13.4" fill="#0a96ff"/><path d="M1593,1451.6 Q1593,1450.6 1594,1450.6 H1597.6 L1603.6,1447.8 Q1605,1447.4 1605,1448.8 V1461.4 Q1605,1462.6 1603.6,1462.2 L1597.6,1459.6 H1594 Q1593,1459.6 1593,1458.6 Z" fill="#0a96ff"/><path d="M1607.6,1450.8 A5.2,5.2 0 0 1 1607.6,1459.6" fill="none" stroke="#0a96ff" stroke-width="2.6" stroke-linecap="round"/><path d="M2527.4,1445.8 H2516.2 Q2514.6,1445.8 2514.6,1447.4 V1462.8 Q2514.6,1464.4 2516.2,1464.4 H2523.6 M2532.6,1452 V1447.4 Q2532.6,1445.8 2531,1445.8" fill="none" stroke="#d2d4d8" stroke-width="1.6" stroke-linecap="round"/><path d="M2520.6,1450.6 A4.4,4.4 0 1 0 2525.2,1456.2 L2531.2,1462.6" fill="none" stroke="#d2d4d8" stroke-width="2" stroke-linecap="round"/><path d="M2519.4,1450.4 L2522.4,1453.6 L2524.6,1451.6" fill="none" stroke="#111111" stroke-width="1.6"/><circle cx="2564.4" cy="1449.2" r="2.6" fill="none" stroke="#d2d4d8" stroke-width="1.5"/><path d="M2567,1449.2 H2579.2" stroke="#d2d4d8" stroke-width="1.5"/><circle cx="2576" cy="1455.6" r="2.6" fill="none" stroke="#d2d4d8" stroke-width="1.5"/><path d="M2561,1455.6 H2573.4" stroke="#d2d4d8" stroke-width="1.5"/><circle cx="2564.4" cy="1462" r="2.6" fill="none" stroke="#d2d4d8" stroke-width="1.5"/><path d="M2567,1462 H2579.2" stroke="#d2d4d8" stroke-width="1.5"/><path d="M2607.8,1452.3880000000001 V1446.2 H2613.9880000000003 M2607.8,1446.2 L2614.7160000000003,1453.116 M2619.812,1446.2 H2626.0 V1452.3880000000001 M2626.0,1446.2 L2619.0840000000003,1453.116 M2607.8,1458.212 V1464.4 H2613.9880000000003 M2607.8,1464.4 L2614.7160000000003,1457.4840000000002 M2619.812,1464.4 H2626.0 V1458.212 M2626.0,1464.4 L2619.0840000000003,1457.4840000000002" fill="none" stroke="#d2d4d8" stroke-width="1.5"/><path d="M1484.4,176.6 L1489.3,171.4 L1494.2,176.6" fill="none" stroke="#9ba0ad" stroke-width="1.7" stroke-linecap="round"/><path d="M1484.6,1363.4 L1489.4,1368.4 L1494.2,1363.4" fill="none" stroke="#9ba0ad" stroke-width="1.7" stroke-linecap="round"/><path d="M679.6,786.4 L676.4,791 L679.6,795.6" fill="none" stroke="#9ba0ad" stroke-width="1.6" stroke-linecap="round"/><path d="M2658.2,786.4 L2654.6,791 L2658.2,795.6" fill="none" stroke="#9ba0ad" stroke-width="1.6" stroke-linecap="round"/></svg>
<div class="a" style="left:337.00px;top:94.50px;width:2326.00px;height:1.30px;background:#5a606b;"></div>
<div class="a" style="left:336.70px;top:95.00px;width:1.20px;height:1386.00px;background:#5a606b;"></div>
<div class="a" style="left:2661.80px;top:95.00px;width:1.50px;height:1386.00px;background:#4d525c;"></div>

<!-- LAPTOP BASE -->
<div class="a" style="left:0;top:1601px;width:3000px;height:46px;background:linear-gradient(90deg,#5c5f64 0px,#b9babd 18px,#ececec 28px,#b5b7ba 40px,#7b7f85 60px,#8c9095 150px,#a4a5a9 300px,#bfc0c4 500px,#d6d7da 900px,#dadbde 1500px,#d6d7da 2100px,#bfc0c4 2500px,#a4a5a9 2700px,#8c9095 2850px,#7b7f85 2940px,#b5b7ba 2960px,#ececec 2972px,#b9babd 2982px,#5c5f64 3000px)"></div>
<div class="a" style="left:0;top:1601px;width:3000px;height:1px;background:rgba(255,255,255,0.35)"></div>
<div class="a" style="left:0;top:1647px;width:3000px;height:39px;clip-path:path('M0,0 L3000,0 C2930,22 2870,36 2796,39 L205,39 C130,36 70,22 0,0 Z');background:linear-gradient(#a9a9ab 0px,#a2a2a4 10px,#8a8889 22px,#5e5858 32px,#352c2a 39px)"></div>
<div class="a" style="left:305px;top:1647px;width:2387px;height:1px;background:#6a6a6c"></div>
<div class="a" style="left:1274.5px;top:1601px;width:430px;height:32px;border-radius:0 0 30px 30px;background:linear-gradient(90deg,#8a8d92 0%,#c4c5c9 18%,#d8d9dc 50%,#c4c5c9 82%,#8a8d92 100%)"></div>
<div class="a" style="left:1274.5px;top:1601px;width:430px;height:32px;border-radius:0 0 30px 30px;background:linear-gradient(rgba(0,0,0,0) 40%,rgba(40,44,50,0.35) 100%)"></div>
</body></html>
